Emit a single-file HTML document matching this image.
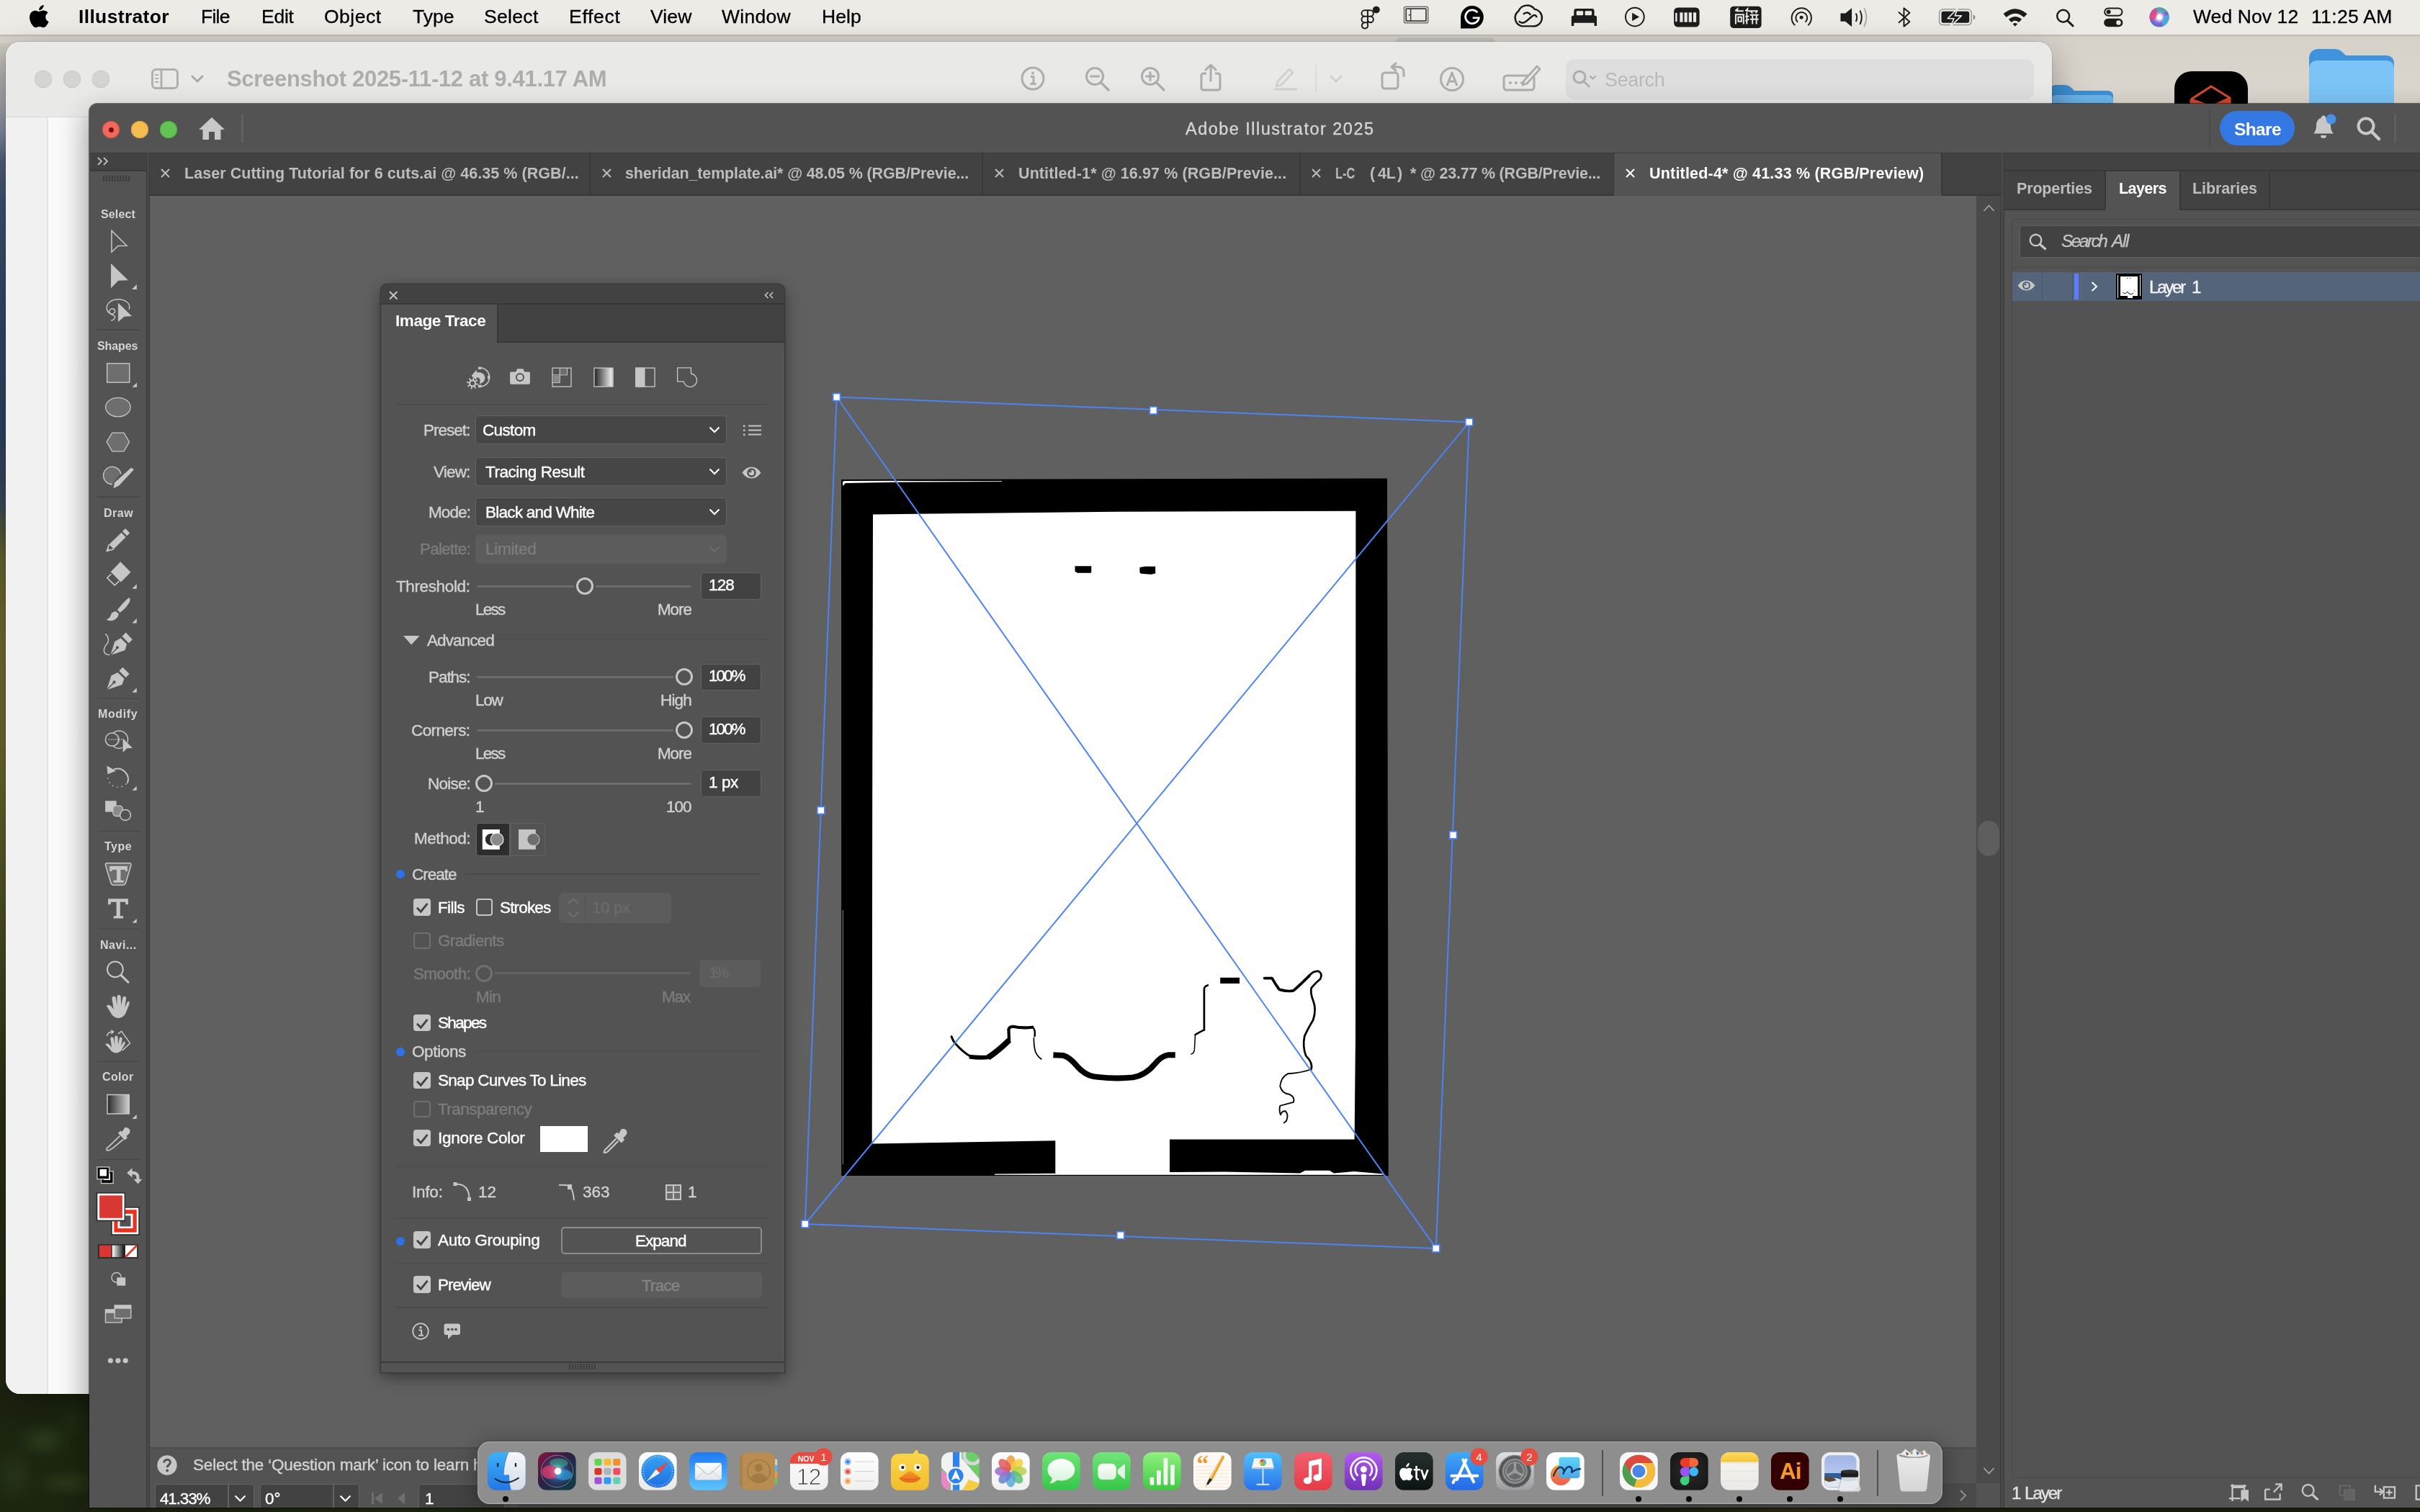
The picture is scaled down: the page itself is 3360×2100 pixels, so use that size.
<!DOCTYPE html>
<html><head><meta charset="utf-8"><title>Adobe Illustrator 2025</title>
<style>
html,body{margin:0;padding:0;}
body{width:3360px;height:2100px;position:relative;overflow:hidden;background:#20280f;font-family:"Liberation Sans",sans-serif;}
div,span,svg{position:absolute;box-sizing:border-box;}
span{white-space:pre;will-change:transform;}
svg{overflow:visible;}
</style></head><body>
<div style="left:0.0px;top:48.0px;width:140.0px;height:2052.0px;background:linear-gradient(180deg,#d6d2ca 0px,#bdbab4 40px,#a3a7ad 100px,#7f8a9c 140px,#52627f 175px,#3f5274 230px,#334668 400px,#2f4263 560px,#3a4a5c 650px,#4d5638 690px,#666630 730px,#746c30 850px,#6c6a2c 1000px,#575828 1150px,#3d441c 1330px,#2a3014 1500px,#222a12 1800px,#1c2410 2052px);"></div>
<div style="left:0.0px;top:1930.0px;width:3360.0px;height:170.0px;background:#1c2510;background-image:radial-gradient(ellipse 40px 26px at 60px 70px,#2c3b1c,transparent),radial-gradient(ellipse 30px 40px at 20px 120px,#26331a,transparent),radial-gradient(ellipse 50px 20px at 95px 130px,#2a3718,transparent),radial-gradient(ellipse 26px 30px at 100px 40px,#222c14,transparent),radial-gradient(ellipse 300px 8px at 1600px 167px,#3a3a1c,transparent),radial-gradient(ellipse 200px 8px at 2500px 167px,#3c3818,transparent),radial-gradient(ellipse 300px 8px at 500px 167px,#222c14,transparent);"></div>
<div style="left:2700.0px;top:48.0px;width:660.0px;height:110.0px;background:linear-gradient(180deg,#d6d1c9,#dcd7cf);"></div>
<div style="left:0.0px;top:48.0px;width:3360.0px;height:12.0px;background:linear-gradient(180deg,#d5d0c8,#d8d3cb);"></div>
<svg style="left:2848.0px;top:110.0px;" width="100" height="40" viewBox="0 0 100 40"><path d="M0 14 Q0 8 6 8 L18 8 Q24 8 28 12 L32 16 L78 16 Q86 16 86 24 L86 40 L0 40Z" fill="#3f8fd6"/><path d="M0 28 Q0 22 8 22 L78 22 Q86 22 86 30 L86 40 L0 40Z" fill="#6cb6ec"/></svg>
<div style="left:3019.0px;top:99.0px;width:102.0px;height:60.0px;background:#000;border-radius:24px 24px 0 0;"></div>
<svg style="left:3040.0px;top:118.0px;" width="60" height="30" viewBox="0 0 60 30"><path d="M2 20 L30 2 L56 18 L56 30 M2 20 L2 30 M2 20 L30 30 L56 18" fill="none" stroke="#d9482b" stroke-width="3"/><path d="M2 20 L30 30 L56 18 L56 30 L2 30Z" fill="#c8452c"/></svg>
<svg style="left:3206.0px;top:66.0px;" width="122" height="80" viewBox="0 0 122 80"><path d="M0 16 Q0 2 14 2 L34 2 Q42 2 47 7 L51 11 L106 11 Q118 11 118 23 L118 80 L0 80Z" fill="#3f93dc"/><path d="M0 30 Q0 18 12 18 L106 18 Q118 18 118 30 L118 80 L0 80Z" fill="#7cc4f5"/></svg>
<div style="left:1937.0px;top:52.0px;width:139.0px;height:8.0px;background:#c4c1bb;border-radius:7px 7px 0 0;"></div>
<div style="left:0.0px;top:0.0px;width:3360.0px;height:47.5px;background:#ecebe5;box-shadow:0 1px 3px rgba(0,0,0,.18);"></div>
<svg style="left:41.0px;top:7.0px;" width="27" height="32" viewBox="0 0 27 32"><path d="M18.7 5.1c1.2-1.5 2-3.500 1.800-5.1-1.700.1-3.800 1.100-5 2.600-1.100 1.300-2.100 3.300-1.800 5.200 1.900.1 3.800-1 5-2.700zM20.500 8.200c-2.800-.2-5.100 1.600-6.400 1.600-1.300 0-3.400-1.500-5.600-1.500-2.900 0-5.500 1.700-7 4.300-3 5.200-.8 12.900 2.100 17.100 1.400 2.100 3.100 4.400 5.400 4.300 2.100-.1 3-1.400 5.600-1.400s3.300 1.400 5.600 1.300c2.300 0 3.800-2.100 5.200-4.200 1.600-2.400 2.300-4.700 2.300-4.800-.1 0-4.500-1.700-4.500-6.800 0-4.300 3.500-6.300 3.600-6.400-1.900-2.900-5-3.300-6.300-3.500z" fill="#000" transform="scale(0.96,0.92)"/></svg>
<span style="left:109.0px;top:10.1px;font-size:26.5px;line-height:26.5px;color:#000;font-weight:bold;letter-spacing:0.34px;">Illustrator</span>
<span style="left:279.0px;top:10.1px;font-size:26.5px;line-height:26.5px;color:#000;letter-spacing:-0.75px;-webkit-text-stroke:0.3px #000;">File</span>
<span style="left:362.8px;top:10.1px;font-size:26.5px;line-height:26.5px;color:#000;letter-spacing:-0.24px;-webkit-text-stroke:0.3px #000;">Edit</span>
<span style="left:450.0px;top:10.1px;font-size:26.5px;line-height:26.5px;color:#000;letter-spacing:0.48px;-webkit-text-stroke:0.3px #000;">Object</span>
<span style="left:572.7px;top:10.1px;font-size:26.5px;line-height:26.5px;color:#000;letter-spacing:0.04px;-webkit-text-stroke:0.3px #000;">Type</span>
<span style="left:672.0px;top:10.1px;font-size:26.5px;line-height:26.5px;color:#000;letter-spacing:0.32px;-webkit-text-stroke:0.3px #000;">Select</span>
<span style="left:790.0px;top:10.1px;font-size:26.5px;line-height:26.5px;color:#000;letter-spacing:0.70px;-webkit-text-stroke:0.3px #000;">Effect</span>
<span style="left:902.5px;top:10.1px;font-size:26.5px;line-height:26.5px;color:#000;letter-spacing:0.13px;-webkit-text-stroke:0.3px #000;">View</span>
<span style="left:1002.4px;top:10.1px;font-size:26.5px;line-height:26.5px;color:#000;letter-spacing:0.26px;-webkit-text-stroke:0.3px #000;">Window</span>
<span style="left:1140.6px;top:10.1px;font-size:26.5px;line-height:26.5px;color:#000;letter-spacing:0.07px;-webkit-text-stroke:0.3px #000;">Help</span>
<span style="left:3044.8px;top:10.1px;font-size:26.5px;line-height:26.5px;color:#000;letter-spacing:0.09px;-webkit-text-stroke:0.3px #000;">Wed Nov 12</span>
<span style="left:3209.0px;top:10.1px;font-size:26.5px;line-height:26.5px;color:#000;letter-spacing:0.35px;-webkit-text-stroke:0.3px #000;">11:25 AM</span>
<div style="left:8.0px;top:58.0px;width:2841.0px;height:1878.0px;background:#f3f3f3;border-radius:20px;box-shadow:0 0 0 1px rgba(0,0,0,.12),0 18px 50px rgba(0,0,0,.35);overflow:hidden;"><div style="left:0;top:0;width:2841px;height:105px;background:#e9e9e8;border-bottom:1px solid #d9d9d9;"></div><div style="left:0;top:105px;width:59px;height:1780px;background:#f1f1f1;border-right:2px solid #e3e3e3;"></div><div style="left:59px;top:105px;width:70px;height:1780px;background:linear-gradient(90deg,#fbfbfb 0,#f8f8f8 22px,#f0f0f0 42px,#e6e6e6 57px);"></div></div>
<div style="left:48.0px;top:98.0px;width:24.0px;height:24.0px;background:#d4d4d3;border-radius:50%;box-shadow:inset 0 0 0 1px #c6c6c6;"></div>
<div style="left:88.0px;top:98.0px;width:24.0px;height:24.0px;background:#d4d4d3;border-radius:50%;box-shadow:inset 0 0 0 1px #c6c6c6;"></div>
<div style="left:128.0px;top:98.0px;width:24.0px;height:24.0px;background:#d4d4d3;border-radius:50%;box-shadow:inset 0 0 0 1px #c6c6c6;"></div>
<svg style="left:210.0px;top:95.0px;" width="40" height="30" viewBox="0 0 40 30"><rect x="1.500" y="1.500" width="35" height="26" rx="5" fill="none" stroke="#b0b0b0" stroke-width="3"/><path d="M14 2V28" stroke="#b0b0b0" stroke-width="3"/><path d="M5 9h5M5 14h5M5 19h5" stroke="#b0b0b0" stroke-width="2"/></svg>
<svg style="left:265.0px;top:104.0px;" width="18" height="12" viewBox="0 0 18 12"><path d="M2 2L9 9L16 2" fill="none" stroke="#a9a9a9" stroke-width="3" stroke-linecap="round" stroke-linejoin="round"/></svg>
<span style="left:314.5px;top:94.4px;font-size:31px;line-height:31px;color:#adadad;font-weight:bold;letter-spacing:-0.31px;">Screenshot 2025-11-12 at 9.41.17 AM</span>
<svg style="left:1416.0px;top:92.0px;" width="36" height="36" viewBox="0 0 36 36"><circle cx="18" cy="17" r="15" fill="none" stroke="#adadad" stroke-width="3"/><circle cx="18" cy="9.500" r="2" fill="#adadad"/><path d="M15 14.500h4v10M14.500 24.500h8" fill="none" stroke="#adadad" stroke-width="2.800"/></svg>
<svg style="left:1506.0px;top:92.0px;" width="36" height="36" viewBox="0 0 36 36"><circle cx="14" cy="14" r="11.500" fill="none" stroke="#adadad" stroke-width="3"/><path d="M22.500 22.500L33 33" stroke="#adadad" stroke-width="3.200" stroke-linecap="round"/><path d="M8.500 14h11" stroke="#adadad" stroke-width="3" stroke-linecap="round"/></svg>
<svg style="left:1583.0px;top:92.0px;" width="36" height="36" viewBox="0 0 36 36"><circle cx="14" cy="14" r="11.500" fill="none" stroke="#adadad" stroke-width="3"/><path d="M22.500 22.500L33 33" stroke="#adadad" stroke-width="3.200" stroke-linecap="round"/><path d="M8.500 14h11M14 8.500v11" stroke="#adadad" stroke-width="3" stroke-linecap="round"/></svg>
<svg style="left:1665.0px;top:88.0px;" width="32" height="40" viewBox="0 0 32 40"><path d="M10 14H6a3 3 0 0 0-3 3v17a3 3 0 0 0 3 3h20a3 3 0 0 0 3-3V17a3 3 0 0 0-3-3h-4" fill="none" stroke="#adadad" stroke-width="3"/><path d="M16 24V3M9 9l7-7 7 7" fill="none" stroke="#adadad" stroke-width="3" stroke-linecap="round" stroke-linejoin="round"/></svg>
<svg style="left:1767.0px;top:90.0px;" width="36" height="36" viewBox="0 0 36 36"><path d="M7 23L23 6l5 5L12 28l-7 2z" fill="none" stroke="#d0d0d0" stroke-width="2.800" stroke-linejoin="round"/><path d="M2 34h32" stroke="#d0d0d0" stroke-width="2.800"/></svg>
<div style="left:1826.0px;top:90.0px;width:2.0px;height:38.0px;background:#dcdcdc;"></div>
<svg style="left:1846.0px;top:104.0px;" width="18" height="12" viewBox="0 0 18 12"><path d="M2 2L9 9L16 2" fill="none" stroke="#d0d0d0" stroke-width="3" stroke-linecap="round" stroke-linejoin="round"/></svg>
<svg style="left:1916.0px;top:86.0px;" width="38" height="40" viewBox="0 0 38 40"><rect x="3" y="15" width="22" height="22" rx="4" fill="none" stroke="#adadad" stroke-width="3"/><path d="M17 7h9a7 7 0 0 1 7 7v7" fill="none" stroke="#adadad" stroke-width="3"/><path d="M22 2l-6 5 6 5" fill="none" stroke="#adadad" stroke-width="3" stroke-linejoin="round" stroke-linecap="round"/></svg>
<svg style="left:1998.0px;top:92.0px;" width="36" height="36" viewBox="0 0 36 36"><circle cx="18" cy="18" r="15.500" fill="none" stroke="#adadad" stroke-width="3"/><path d="M11 27l7-18 7 18M14 21h8" fill="none" stroke="#adadad" stroke-width="3" stroke-linejoin="round"/></svg>
<svg style="left:2086.0px;top:88.0px;" width="54" height="40" viewBox="0 0 54 40"><rect x="2" y="17" width="42" height="20" rx="4" fill="none" stroke="#adadad" stroke-width="3"/><circle cx="11" cy="27" r="2" fill="#adadad"/><circle cx="19" cy="27" r="2" fill="#adadad"/><circle cx="27" cy="27" r="2" fill="#adadad"/><path d="M30 24L48 4l4 4-18 20-6 2z" fill="#e9e9e8" stroke="#adadad" stroke-width="2.800" stroke-linejoin="round"/></svg>
<div style="left:2174.0px;top:82.0px;width:650.0px;height:56.0px;background:#dedede;border-radius:12px;"></div>
<svg style="left:2183.0px;top:97.0px;" width="34" height="28" viewBox="0 0 34 28"><circle cx="10" cy="10" r="8" fill="none" stroke="#adadad" stroke-width="3"/><path d="M16 16l7 7" stroke="#adadad" stroke-width="2.800" stroke-linecap="round"/><path d="M25 9l3.500 3.500L32 9" fill="none" stroke="#adadad" stroke-width="2.200" stroke-linecap="round" stroke-linejoin="round"/></svg>
<span style="left:2228.4px;top:98.3px;font-size:27px;line-height:27px;color:#b9b9b9;letter-spacing:-0.37px;">Search</span>
<div style="left:124.0px;top:144.0px;width:3300.0px;height:1949.5px;background:#535353;border-radius:11px 0 0 0;box-shadow:0 0 0 1px rgba(0,0,0,.5),0 14px 40px rgba(0,0,0,.32);"></div>
<div style="left:142.0px;top:168.0px;width:24.0px;height:24.0px;background:#ee6a5f;border-radius:50%;box-shadow:inset 0 0 0 1px #d1503f;"></div>
<div style="left:150.5px;top:176.5px;width:7.0px;height:7.0px;background:#7a0d08;border-radius:50%;"></div>
<div style="left:182.0px;top:168.0px;width:24.0px;height:24.0px;background:#f5bd4f;border-radius:50%;box-shadow:inset 0 0 0 1px #d6a243;"></div>
<div style="left:222.0px;top:168.0px;width:24.0px;height:24.0px;background:#61c454;border-radius:50%;box-shadow:inset 0 0 0 1px #4fa73f;"></div>
<svg style="left:275.0px;top:162.0px;" width="38" height="33" viewBox="0 0 38 33"><path d="M19 1L1 18h5.500v14H15V21h8v11h8.500V18H37z" fill="#c8c8c8"/></svg>
<div style="left:335.0px;top:158.5px;width:3.0px;height:39.0px;background:#606060;"></div>
<span style="left:1646.2px;top:168.0px;font-size:23.5px;line-height:23.5px;color:#d6d6d6;letter-spacing:1.48px;-webkit-text-stroke:0.35px #d6d6d6;">Adobe Illustrator 2025</span>
<div style="left:3067.0px;top:152.0px;width:2.0px;height:52.0px;background:#4a4a4a;"></div>
<div style="left:3081.8px;top:154.2px;width:104.2px;height:47.7px;background:#3478e3;border-radius:24px;"></div>
<span style="left:3101.5px;top:167.5px;font-size:24.5px;line-height:24.5px;color:#fff;font-weight:bold;letter-spacing:-0.62px;">Share</span>
<svg style="left:3210.0px;top:159.0px;" width="34" height="36" viewBox="0 0 34 36"><path d="M13 4.500a3 3 0 0 1 6 0c5 1.500 7 6 7 11 0 6 2 9 4 11H2c2-2 4-5 4-11 0-5 2-9.500 7-11z" fill="#c8c8c8"/><path d="M12 29a4 4 0 0 0 8 0z" fill="#c8c8c8"/><circle cx="26.500" cy="6.500" r="7" fill="#4a90e8"/></svg>
<svg style="left:3271.0px;top:160.5px;" width="35" height="35" viewBox="0 0 35 35"><circle cx="14" cy="14" r="10.500" fill="none" stroke="#c8c8c8" stroke-width="4"/><path d="M22 22l10 10" stroke="#c8c8c8" stroke-width="4.500" stroke-linecap="round"/></svg>
<div style="left:3324.0px;top:158.0px;width:3.0px;height:40.0px;background:#5d5d5d;"></div>
<div style="left:125.0px;top:212.0px;width:3235.0px;height:2.0px;background:#3a3a3a;"></div>
<div style="left:125.0px;top:213.0px;width:78.0px;height:23.0px;background:#424242;"></div>
<div style="left:125.0px;top:236.0px;width:78.0px;height:2.0px;background:#3a3a3a;"></div>
<div style="left:202.5px;top:212.0px;width:5.5px;height:1882.0px;background:#484848;border-left:1.500px solid #3c3c3c;border-right:1.500px solid #3c3c3c;"></div>
<svg style="left:134.0px;top:217.0px;" width="18" height="14" viewBox="0 0 18 14"><path d="M2 2l5 5-5 5M10 2l5 5-5 5" fill="none" stroke="#c0c0c0" stroke-width="1.800"/></svg>
<svg style="left:143.0px;top:243.0px;" width="40" height="10" viewBox="0 0 40 10"><rect x="0.0" y="1" width="2" height="8" fill="#3c3c3c"/><rect x="3.9" y="1" width="2" height="8" fill="#3c3c3c"/><rect x="7.8" y="1" width="2" height="8" fill="#3c3c3c"/><rect x="11.7" y="1" width="2" height="8" fill="#3c3c3c"/><rect x="15.6" y="1" width="2" height="8" fill="#3c3c3c"/><rect x="19.5" y="1" width="2" height="8" fill="#3c3c3c"/><rect x="23.4" y="1" width="2" height="8" fill="#3c3c3c"/><rect x="27.3" y="1" width="2" height="8" fill="#3c3c3c"/><rect x="31.2" y="1" width="2" height="8" fill="#3c3c3c"/><rect x="35.1" y="1" width="2" height="8" fill="#3c3c3c"/></svg>
<div style="left:208.0px;top:213.0px;width:2569.0px;height:57.0px;background:#424242;"></div>
<div style="left:208.0px;top:269.5px;width:2569.0px;height:2.0px;background:#383838;"></div>
<div style="left:818.0px;top:213.0px;width:2.0px;height:57.0px;background:#383838;"></div>
<svg style="left:223.3px;top:234.0px;" width="13" height="13" viewBox="0 0 13 13"><path d="M1 1l11 11M12 1L1 12" stroke="#bdbdbd" stroke-width="2"/></svg>
<span style="left:256.0px;top:231.0px;font-size:21.5px;line-height:21.5px;color:#bdbdbd;font-weight:bold;letter-spacing:0.05px;">Laser Cutting Tutorial for 6 cuts.ai @ 46.35 % (RGB/...</span>
<div style="left:1363.0px;top:213.0px;width:2.0px;height:57.0px;background:#383838;"></div>
<svg style="left:835.5px;top:234.0px;" width="13" height="13" viewBox="0 0 13 13"><path d="M1 1l11 11M12 1L1 12" stroke="#bdbdbd" stroke-width="2"/></svg>
<span style="left:868.4px;top:231.0px;font-size:21.5px;line-height:21.5px;color:#bdbdbd;font-weight:bold;letter-spacing:-0.14px;">sheridan_template.ai* @ 48.05 % (RGB/Previe...</span>
<div style="left:1803.6px;top:213.0px;width:2.0px;height:57.0px;background:#383838;"></div>
<svg style="left:1381.2px;top:234.0px;" width="13" height="13" viewBox="0 0 13 13"><path d="M1 1l11 11M12 1L1 12" stroke="#bdbdbd" stroke-width="2"/></svg>
<span style="left:1414.2px;top:231.0px;font-size:21.5px;line-height:21.5px;color:#bdbdbd;font-weight:bold;letter-spacing:0.10px;">Untitled-1* @ 16.97 % (RGB/Previe...</span>
<div style="left:2240.4px;top:213.0px;width:2.0px;height:57.0px;background:#383838;"></div>
<svg style="left:1821.0px;top:234.0px;" width="13" height="13" viewBox="0 0 13 13"><path d="M1 1l11 11M12 1L1 12" stroke="#bdbdbd" stroke-width="2"/></svg>
<span style="left:1854.0px;top:231.0px;font-size:21.5px;line-height:21.5px;color:#bdbdbd;font-weight:bold;transform:scaleX(.76);transform-origin:left center;">L-C</span>
<span style="left:1901.5px;top:231.0px;font-size:21.5px;line-height:21.5px;color:#bdbdbd;font-weight:bold;">(</span>
<span style="left:1913.0px;top:231.0px;font-size:21.5px;line-height:21.5px;color:#bdbdbd;font-weight:bold;letter-spacing:-0.30px;">4L</span>
<span style="left:1939.5px;top:231.0px;font-size:21.5px;line-height:21.5px;color:#bdbdbd;font-weight:bold;">)</span>
<span style="left:1958.0px;top:231.0px;font-size:21.5px;line-height:21.5px;color:#bdbdbd;font-weight:bold;letter-spacing:-0.21px;">* @ 23.77 % (RGB/Previe...</span>
<div style="left:2241.4px;top:213.0px;width:454.9px;height:58.5px;background:#535353;"></div>
<div style="left:2695.3px;top:213.0px;width:2.0px;height:57.0px;background:#383838;"></div>
<svg style="left:2257.2px;top:234.0px;" width="13" height="13" viewBox="0 0 13 13"><path d="M1 1l11 11M12 1L1 12" stroke="#ffffff" stroke-width="2"/></svg>
<span style="left:2290.2px;top:231.0px;font-size:21.5px;line-height:21.5px;color:#ffffff;font-weight:bold;letter-spacing:0.19px;">Untitled-4* @ 41.33 % (RGB/Preview)</span>
<div style="left:208.0px;top:271.5px;width:2535.5px;height:1739.0px;background:#606060;"></div>
<div style="left:2743.5px;top:271.5px;width:33.5px;height:1788.0px;background:#4a4a4a;"></div>
<svg style="left:2752.5px;top:284.0px;" width="17" height="10" viewBox="0 0 17 10"><path d="M1.500 9L8.500 1.500 15.500 9" fill="none" stroke="#a2a2a2" stroke-width="1.800"/></svg>
<div style="left:2745.5px;top:1140.0px;width:30.0px;height:49.0px;background:#5e5e5e;border-radius:15px;"></div>
<svg style="left:2752.5px;top:2038.0px;" width="17" height="10" viewBox="0 0 17 10"><path d="M1.500 1L8.500 8.500 15.500 1" fill="none" stroke="#a2a2a2" stroke-width="1.800"/></svg>
<div style="left:2777.0px;top:212.0px;width:5.5px;height:1882.0px;background:#484848;border-left:1.500px solid #3c3c3c;border-right:1.500px solid #3c3c3c;"></div>
<div style="left:208.0px;top:2010.2px;width:2535.5px;height:49.6px;background:#535353;"></div>
<div style="left:208.0px;top:2010.2px;width:2535.5px;height:1.8px;background:#4c4c4c;"></div>
<div style="left:720.0px;top:2059.8px;width:2023.5px;height:34.0px;background:#4a4a4a;"></div>
<div style="left:2743.5px;top:2059.5px;width:33.5px;height:34.0px;background:#535353;"></div>
<svg style="left:218.0px;top:2020.5px;" width="28" height="28" viewBox="0 0 28 28"><circle cx="14" cy="14" r="13.700" fill="#c6c6c6"/><path d="M9.800 10.500c0-2.600 1.900-4.200 4.400-4.200s4.300 1.500 4.300 3.800c0 3.300-4.200 3.500-4.200 6.900" fill="none" stroke="#535353" stroke-width="3"/><circle cx="14.200" cy="21.500" r="1.900" fill="#535353"/></svg>
<span style="left:268.0px;top:2024.0px;font-size:22.5px;line-height:22.5px;color:#d2d2d2;letter-spacing:-0.19px;-webkit-text-stroke:0.4px #d2d2d2;">Select the ‘Question mark’ icon to learn how</span>
<div style="left:215.0px;top:2060.6px;width:138.0px;height:33.0px;background:#424242;border:1.500px solid #636363;border-bottom:none;border-radius:5px 5px 0 0;"></div>
<div style="left:316.0px;top:2062.0px;width:1.5px;height:31.5px;background:#636363;"></div>
<span style="left:222.3px;top:2070.5px;font-size:22.5px;line-height:22.5px;color:#fff;letter-spacing:-1.15px;-webkit-text-stroke:0.4px #fff;">41.33%</span>
<svg style="left:325.0px;top:2076.0px;" width="17" height="11" viewBox="0 0 17 11"><path d="M1.500 1.500L8.500 8.500 15.500 1.500" fill="none" stroke="#fff" stroke-width="2.200"/></svg>
<div style="left:361.0px;top:2060.6px;width:138.0px;height:33.0px;background:#424242;border:1.500px solid #636363;border-bottom:none;border-radius:5px 5px 0 0;"></div>
<div style="left:462.0px;top:2062.0px;width:1.5px;height:31.5px;background:#636363;"></div>
<span style="left:368.4px;top:2070.5px;font-size:22.5px;line-height:22.5px;color:#fff;-webkit-text-stroke:0.4px #fff;">0°</span>
<svg style="left:471.0px;top:2076.0px;" width="17" height="11" viewBox="0 0 17 11"><path d="M1.500 1.500L8.500 8.500 15.500 1.500" fill="none" stroke="#fff" stroke-width="2.200"/></svg>
<svg style="left:515.0px;top:2072.0px;" width="18" height="18" viewBox="0 0 18 18"><rect x="1" y="1" width="3" height="16" fill="#6f6f6f"/><path d="M16 1v16L5 9z" fill="#6f6f6f"/></svg>
<svg style="left:551.0px;top:2072.0px;" width="12" height="18" viewBox="0 0 12 18"><path d="M11 1v16L1 9z" fill="#6f6f6f"/></svg>
<div style="left:581.0px;top:2060.6px;width:120.0px;height:33.0px;background:#424242;border:1.500px solid #636363;border-bottom:none;border-radius:5px 5px 0 0;"></div>
<span style="left:590.2px;top:2070.5px;font-size:22.5px;line-height:22.5px;color:#fff;-webkit-text-stroke:0.4px #fff;">1</span>
<svg style="left:2720.0px;top:2068.0px;" width="12" height="18" viewBox="0 0 12 18"><path d="M2 2l7 7-7 7" fill="none" stroke="#8e8e8e" stroke-width="2"/></svg>
<span style="left:139.5px;top:290.0px;font-size:16px;line-height:16px;color:#d4d4d4;font-weight:bold;letter-spacing:0.14px;">Select</span>
<span style="left:135.3px;top:472.8px;font-size:16px;line-height:16px;color:#d4d4d4;font-weight:bold;letter-spacing:-0.09px;">Shapes</span>
<span style="left:143.5px;top:704.7px;font-size:16px;line-height:16px;color:#d4d4d4;font-weight:bold;letter-spacing:0.49px;">Draw</span>
<span style="left:136.3px;top:984.1px;font-size:16px;line-height:16px;color:#d4d4d4;font-weight:bold;letter-spacing:0.61px;">Modify</span>
<span style="left:144.6px;top:1167.9px;font-size:16px;line-height:16px;color:#d4d4d4;font-weight:bold;letter-spacing:0.51px;">Type</span>
<span style="left:138.5px;top:1304.8px;font-size:16px;line-height:16px;color:#d4d4d4;font-weight:bold;letter-spacing:0.52px;">Navi...</span>
<span style="left:142.0px;top:1488.3px;font-size:16px;line-height:16px;color:#d4d4d4;font-weight:bold;letter-spacing:0.36px;">Color</span>
<div style="left:134.5px;top:457.4px;width:59.0px;height:1.6px;background:#464646;"></div>
<div style="left:134.5px;top:689.4px;width:59.0px;height:1.6px;background:#464646;"></div>
<div style="left:134.5px;top:969.5px;width:59.0px;height:1.6px;background:#464646;"></div>
<div style="left:134.5px;top:1153.6px;width:59.0px;height:1.6px;background:#464646;"></div>
<div style="left:134.5px;top:1289.6px;width:59.0px;height:1.6px;background:#464646;"></div>
<div style="left:134.5px;top:1473.6px;width:59.0px;height:1.6px;background:#464646;"></div>
<div style="left:134.5px;top:1609.6px;width:59.0px;height:1.6px;background:#464646;"></div>
<svg style="left:125px;top:280px;" width="80" height="180" viewBox="0 0 672 1512" preserveAspectRatio="none">
<path d="M252 340 L252 588 L328 516 L428 514Z" fill="none" stroke="#c6c6c6" stroke-width="13" stroke-linejoin="miter"/>
<path d="M244 722 L244 1010 L330 922 L445 918Z" fill="#c6c6c6"/>
<path d="M545 965V1025H487Z" fill="#c6c6c6"/>
<path d="M455 1258 C480 1180 400 1140 330 1140 C250 1140 195 1185 195 1240 C195 1290 235 1320 275 1305 C300 1290 295 1255 265 1250 C235 1248 215 1275 230 1300 C250 1330 300 1320 290 1350 C285 1375 265 1385 245 1388" fill="none" stroke="#c6c6c6" stroke-width="12"/>
<path d="M325 1175 L325 1410 L400 1345 L495 1340Z" fill="#c6c6c6" stroke="#535353" stroke-width="6"/>
</svg>
<svg style="left:125px;top:460px;" width="80" height="240" viewBox="0 0 504 1512" preserveAspectRatio="none">
<rect x="149" y="282" width="196" height="166" fill="#6e6e6e" stroke="#c6c6c6" stroke-width="9"/>
<path d="M410 450V490H368Z" fill="#c6c6c6"/>
<ellipse cx="245" cy="665" rx="109" ry="83" fill="#6e6e6e" stroke="#c6c6c6" stroke-width="8"/>
<path d="M146 968L194 889H296L344 968L296 1051H194Z" fill="#6e6e6e" stroke="#c6c6c6" stroke-width="8"/>
<path d="M195 1340 A77 77 0 1 1 268 1245 L215 1310Z" fill="#6e6e6e"/>
<path d="M195 1340 A77 77 0 1 1 270 1250" fill="none" stroke="#c6c6c6" stroke-width="9"/>
<path d="M355 1198 Q372 1192 382 1212 L255 1350 L205 1375 L215 1325Z" fill="#c6c6c6"/>
</svg>
<svg style="left:125px;top:690px;" width="80" height="280" viewBox="0 0 432 1512" preserveAspectRatio="none">
<path d="M265 238L298 272L277 293L243 259Z" fill="#c6c6c6"/>
<path d="M235 268L268 302L178 392L143 358Z" fill="#c6c6c6"/>
<path d="M143 358L125 408L178 392" fill="none" stroke="#c6c6c6" stroke-width="9" stroke-linejoin="round"/>
<path d="M125 408L134 384L150 400Z" fill="#c6c6c6"/>
<path d="M228 488L305 565L232 640L155 563Z" fill="#c6c6c6"/>
<path d="M158 580L128 608L185 664L218 632" fill="none" stroke="#c6c6c6" stroke-width="9" stroke-linejoin="round"/>
<path d="M350 655V690H315Z" fill="#c6c6c6"/>
<path d="M205 848Q250 790 290 757Q306 760 296 790Q266 842 224 868Z" fill="#c6c6c6"/>
<path d="M196 860L216 880Q202 925 160 930Q135 931 122 920Q150 910 156 885Q165 860 196 860Z" fill="#c6c6c6"/>
<path d="M350 912V948H315Z" fill="#c6c6c6"/>
<path d="M115 1028Q145 1050 135 1092Q100 1130 105 1160Q115 1188 148 1185" fill="none" stroke="#c6c6c6" stroke-width="8"/>
<path d="M268 1018L318 1070L290 1098L240 1046Z" fill="#c6c6c6"/>
<path d="M230 1060L276 1106L262 1150L152 1190L186 1085Z" fill="#c6c6c6"/>
<path d="M152 1190L205 1132" stroke="#535353" stroke-width="8"/><circle cx="205" cy="1130" r="11" fill="#535353"/>
<path d="M245 1278L295 1328L268 1355L218 1305Z" fill="#c6c6c6"/>
<path d="M208 1318L256 1364L240 1410L125 1448L160 1340Z" fill="#c6c6c6"/>
<path d="M125 1448L180 1392" stroke="#535353" stroke-width="8"/><circle cx="181" cy="1390" r="11" fill="#535353"/>
<path d="M350 1432V1468H315Z" fill="#c6c6c6"/>
</svg>
<svg style="left:125px;top:970px;" width="80" height="330" viewBox="0 0 367 1512" preserveAspectRatio="none">
<circle cx="185" cy="262" r="56" fill="none" stroke="#c6c6c6" stroke-width="7"/>
<circle cx="140" cy="262" r="42" fill="#535353" stroke="#c6c6c6" stroke-width="7"/>
<path d="M175 232 A42 42 0 0 1 175 292" fill="none" stroke="#8a8a8a" stroke-width="6"/>
<path d="M118 262H210" stroke="#c6c6c6" stroke-width="6" stroke-dasharray="7 6"/>
<path d="M207 250V348L235 320L275 318Z" fill="#c6c6c6" stroke="#535353" stroke-width="4"/>
<path d="M150 452 A68 68 0 0 1 238 540" fill="none" stroke="#c6c6c6" stroke-width="9"/>
<path d="M108 428L112 482L165 462Z" fill="#c6c6c6"/>
<circle cx="243.9" cy="520.3" r="4" fill="#c6c6c6"/><circle cx="228.1" cy="545.1" r="4" fill="#c6c6c6"/><circle cx="203.3" cy="560.9" r="4" fill="#c6c6c6"/><circle cx="174.1" cy="564.7" r="4" fill="#c6c6c6"/><circle cx="146.0" cy="555.9" r="4" fill="#c6c6c6"/><circle cx="124.3" cy="536.0" r="4" fill="#c6c6c6"/><circle cx="113.0" cy="508.8" r="4" fill="#c6c6c6"/>
<path d="M297 558V585H268Z" fill="#c6c6c6"/>
<rect x="97" y="652" width="71" height="70" fill="#c6c6c6"/>
<rect x="146" y="683" width="62" height="66" rx="20" fill="#8a8a8a" stroke="#c6c6c6" stroke-width="6"/>
<circle cx="225" cy="742" r="34" fill="#535353" stroke="#c6c6c6" stroke-width="7"/>
<path d="M110 1048H250Q266 1048 260 1066L228 1172Q224 1188 208 1188H152Q136 1188 132 1172L100 1066Q94 1048 110 1048Z" fill="#6e6e6e" stroke="#c6c6c6" stroke-width="7"/>
<path d="M125 1068H238V1100H224V1090H195V1158H215V1172H150V1158H170V1090H140V1100H125Z" fill="#c6c6c6"/>
<path d="M115 1275H243V1312H226V1296H192V1385H212V1400H150V1385H168V1296H132V1312H115Z" fill="#c6c6c6"/>
<path d="M297 1402V1428H268Z" fill="#c6c6c6"/>
</svg>
<svg style="left:125px;top:1290px;" width="80" height="330" viewBox="0 0 367 1512" preserveAspectRatio="none">
<circle cx="160" cy="258" r="50" fill="none" stroke="#c6c6c6" stroke-width="9"/>
<path d="M198 296L243 340" stroke="#c6c6c6" stroke-width="14" stroke-linecap="round"/>
<path d="M105 490Q118 478 135 492L150 512L140 445Q140 430 152 430Q162 430 165 445L172 488L172 432Q174 420 184 420Q194 420 196 432L198 488L208 440Q212 428 222 430Q232 434 230 446L222 500L236 470Q242 458 250 464Q254 470 248 484L226 540Q212 568 180 568Q150 568 135 540Z" fill="#c6c6c6"/>
<path d="M98 735Q110 724 124 738L138 756L130 700Q130 688 140 688Q148 688 151 700L157 738L157 690Q159 680 167 680Q175 680 177 690L179 738L187 698Q190 688 198 690Q206 693 205 703L198 748L210 724Q215 714 222 718Q226 723 221 735L203 768Q192 790 166 790Q140 790 128 768Z" fill="#c6c6c6"/>
<path d="M178 668L200 652L255 728L205 775" fill="none" stroke="#c6c6c6" stroke-width="7"/>
<path d="M108 682 A34 34 0 0 1 140 655" fill="none" stroke="#c6c6c6" stroke-width="7"/>
<path d="M135 640L155 655L135 672Z" fill="#c6c6c6"/>
<defs><linearGradient id="tg1" x1="0" x2="1"><stop offset="0" stop-color="#2a2a2a"/><stop offset="1" stop-color="#d0d0d0"/></linearGradient></defs>
<rect x="110" y="1056" width="139" height="121" fill="url(#tg1)" stroke="#c6c6c6" stroke-width="7"/>
<path d="M297 1182V1210H268Z" fill="#c6c6c6"/>
<path d="M222 1265Q245 1260 254 1282Q258 1300 240 1312L232 1320L238 1330L222 1345L178 1300L195 1285L204 1292Z" fill="#c6c6c6"/>
<path d="M190 1318L120 1385Q108 1392 105 1405Q112 1415 125 1408L142 1398L212 1340" fill="none" stroke="#c6c6c6" stroke-width="8" stroke-linejoin="round"/>
</svg>
<svg style="left:125px;top:1610px;" width="80" height="300" viewBox="0 0 403 1512" preserveAspectRatio="none">
<rect x="78" y="85" width="84" height="84" fill="#000" stroke="#c6c6c6" stroke-width="7"/>
<rect x="98" y="103" width="40" height="40" fill="none" stroke="#fff" stroke-width="7"/>
<rect x="50" y="55" width="84" height="84" fill="#000" stroke="#c6c6c6" stroke-width="7"/>
<rect x="68" y="70" width="48" height="48" fill="#fff"/>
<path d="M258 96L295 62V84Q345 84 345 130V140H365L335 172L305 140H325V128Q325 106 295 106V128Z" fill="#c6c6c6"/>
<rect x="147" y="333" width="200" height="200" fill="#2c2c2c"/>
<rect x="155" y="341" width="184" height="184" fill="#fff"/>
<rect x="168" y="354" width="158" height="158" fill="#e8311f"/>
<rect x="194" y="382" width="106" height="102" fill="#fff"/>
<rect x="209" y="395" width="76" height="76" fill="#535353"/>
<rect x="43" y="232" width="204" height="203" fill="#2c2c2c"/>
<rect x="52" y="240" width="188" height="186" fill="#fff"/>
<rect x="66" y="254" width="160" height="158" fill="#d93832"/>
<rect x="55" y="595" width="282" height="100" fill="#2c2c2c"/>
<rect x="65" y="603" width="83" height="82" fill="#d93832"/>
<defs><linearGradient id="tg2" x1="0" x2="1"><stop offset="0" stop-color="#fff"/><stop offset="1" stop-color="#111"/></linearGradient></defs>
<rect x="155" y="603" width="85" height="82" fill="url(#tg2)"/>
<rect x="247" y="603" width="81" height="82" fill="#fff"/>
<path d="M247 685L328 603" stroke="#e8311f" stroke-width="14"/>
<circle cx="185" cy="828" r="34" fill="none" stroke="#c6c6c6" stroke-width="7"/>
<rect x="188" y="828" width="60" height="57" fill="#c6c6c6"/>
<rect x="108" y="1053" width="114" height="90" fill="#6e6e6e" stroke="#c6c6c6" stroke-width="7"/>
<rect x="108" y="1053" width="114" height="24" fill="#c6c6c6"/>
<rect x="172" y="1023" width="114" height="90" fill="#6e6e6e" stroke="#c6c6c6" stroke-width="7"/>
<rect x="172" y="1023" width="114" height="24" fill="#c6c6c6"/>
<circle cx="143" cy="1410" r="18" fill="#c6c6c6"/><circle cx="196" cy="1410" r="18" fill="#c6c6c6"/><circle cx="248" cy="1410" r="18" fill="#c6c6c6"/>
</svg>

<svg style="left:0;top:0;" width="3360" height="2100" viewBox="0 0 3360 2100">
<path d="M1168 666 L1926 664.500 L1927.700 1633 L1168.200 1633Z" fill="#000"/>
<path d="M1212 714.400 L1550 710.700 L1882.400 709.800 L1882.200 1200 L1882 1440 L1880.600 1582.600 L1624 1582.600 L1624 1631.800 L1465.300 1631.800 L1465.300 1584.300 L1210.700 1588.400 L1211.200 1100Z" fill="#fff"/>
<path d="M1624 1628 L1700 1627.500 L1805 1629.500 L1812 1625.800 L1846 1625.800 L1852 1629.500 L1880 1627 L1921 1630.500 L1921 1631.800 L1624 1631.800Z" fill="#fff"/>
<path d="M1381 1630.600 L1465.300 1629.800 L1465.300 1631.800 L1381 1631.800Z" fill="#fff"/>
<path d="M1170 669.200 L1172 668 L1240 667.800 L1391 668.300 L1391 669 L1240 669.700 L1174 671 L1170 675Z" fill="#fff"/>
<path d="M1170.300 1264 V1617" stroke="#aaa" stroke-width="0.800"/>
<path d="M1492.500 786.300 H1515.300 V794 L1514.500 795.700 H1496 L1492.500 793.500Z" fill="#000"/>
<path d="M1582.400 788 L1590 786.700 H1604.200 V796.500 L1598 797.800 L1584 796.800 L1582.400 795Z" fill="#000"/>
</svg>
<svg style="left:1300px;top:1330px;" width="600" height="250" viewBox="0 0 2420 1008" fill="none" stroke="#000" stroke-linecap="round" stroke-linejoin="round">
<path d="M85 442 Q95 470 110 485 Q150 530 190 553" stroke-width="12"/>
<path d="M185 555 Q250 564 300 556" stroke-width="24" stroke-linecap="butt"/>
<path d="M290 560 Q350 520 408 462" stroke-width="32" stroke-linecap="butt"/>
<path d="M408 470 L405 402 Q410 386 430 386 Q480 396 538 390" stroke-width="17"/>
<path d="M538 390 Q556 400 551 440" stroke-width="10"/>
<path d="M546 450 Q546 500 556 530 Q570 558 588 568" stroke-width="7"/>
<path d="M655 545 L710 548 Q745 556 790 610 Q830 655 880 666 Q1000 682 1100 671 Q1170 660 1220 600 Q1260 550 1300 545 L1338 545" stroke-width="32" stroke-linecap="butt"/>
<path d="M1520 155 Q1500 160 1500 178 L1500 405" stroke-width="11"/>
<path d="M1500 405 Q1470 420 1450 432" stroke-width="10"/>
<path d="M1450 432 Q1448 480 1445 520 Q1442 538 1427 540" stroke-width="6"/>
<rect x="1590" y="112" width="108" height="33" fill="#000" stroke="none"/>
<path d="M1838 115 L1880 115 Q1900 150 1920 178 Q1960 192 2000 185 Q2040 150 2088 102" stroke-width="15"/>
<path d="M2088 102 Q2110 72 2140 76 Q2166 90 2150 120 Q2125 140 2100 170 Q2094 200 2110 240 Q2130 290 2110 350 Q2080 400 2062 440 Q2050 500 2070 550 Q2110 590 2100 625" stroke-width="11"/>
<path d="M2100 625 Q2050 645 1970 650 Q1930 670 1925 720 Q1935 760 1975 765 Q2010 780 2000 810 Q1960 820 1925 830 Q1918 860 1928 880 Q1935 858 1955 860 Q1975 880 1960 915 L1947 925" stroke-width="7.500"/>
</svg>

<svg style="left:0;top:0;" width="3360" height="2100" viewBox="0 0 3360 2100"><path d="M1161.6 551.5 L2039.8 586.2 L1993.8 1733.9 L1117.8 1700Z M1161.6 551.5 L1993.8 1733.9 M2039.8 586.2 L1117.8 1700" fill="none" stroke="#4c83f7" stroke-width="2"/><rect x="1156.6" y="546.5" width="10" height="10" fill="#fff" stroke="#4c83f7" stroke-width="1.700"/><rect x="2034.8" y="581.2" width="10" height="10" fill="#fff" stroke="#4c83f7" stroke-width="1.700"/><rect x="1988.8" y="1728.9" width="10" height="10" fill="#fff" stroke="#4c83f7" stroke-width="1.700"/><rect x="1112.8" y="1695.0" width="10" height="10" fill="#fff" stroke="#4c83f7" stroke-width="1.700"/><rect x="1596.4" y="565.0" width="10" height="10" fill="#fff" stroke="#4c83f7" stroke-width="1.700"/><rect x="2012.6" y="1154.8" width="10" height="10" fill="#fff" stroke="#4c83f7" stroke-width="1.700"/><rect x="1550.8" y="1710.7" width="10" height="10" fill="#fff" stroke="#4c83f7" stroke-width="1.700"/><rect x="1134.8" y="1120.5" width="10" height="10" fill="#fff" stroke="#4c83f7" stroke-width="1.700"/></svg>
<div style="left:529.0px;top:394.5px;width:560.0px;height:1511.5px;background:#535353;border-radius:9px 9px 0 0;box-shadow:0 0 0 1.500px #3a3a3a,0 6px 22px rgba(0,0,0,.45);"></div>
<div style="left:529.0px;top:394.5px;width:560.0px;height:27.0px;background:#424242;border-radius:9px 9px 0 0;"></div>
<div style="left:529.0px;top:421.0px;width:560.0px;height:2.0px;background:#383838;"></div>
<div style="left:529.0px;top:423.0px;width:560.0px;height:52.5px;background:#424242;"></div>
<div style="left:529.0px;top:423.0px;width:161.0px;height:54.0px;background:#535353;"></div>
<div style="left:689.5px;top:423.0px;width:2.0px;height:52.5px;background:#383838;"></div>
<div style="left:691.0px;top:474.0px;width:398.0px;height:2.0px;background:#383838;"></div>
<svg style="left:540.0px;top:404.0px;" width="13" height="13" viewBox="0 0 13 13"><path d="M1 1l10.500 10.500M11.500 1L1 11.500" stroke="#c6c6c6" stroke-width="2"/></svg>
<svg style="left:1061.0px;top:404.5px;" width="14" height="10" viewBox="0 0 14 10"><path d="M5.500 1L1.500 5l4 4M12 1L8 5l4 4" fill="none" stroke="#c6c6c6" stroke-width="1.600"/></svg>
<span style="left:548.5px;top:435.0px;font-size:22.5px;line-height:22.5px;color:#ffffff;font-weight:bold;letter-spacing:-0.44px;">Image Trace</span>
<svg style="left:630px;top:490px;" width="360" height="70" viewBox="0 0 2420 471" preserveAspectRatio="none">
<path d="M245 140 A88 88 0 0 1 245 316" fill="none" stroke="#c6c6c6" stroke-width="11"/>
<rect x="228" y="132" width="30" height="22" rx="5" fill="#c6c6c6"/><rect x="228" y="300" width="30" height="24" rx="5" fill="#c6c6c6"/><rect x="316" y="212" width="22" height="32" rx="5" fill="#c6c6c6"/>
<path d="M165 215 L212 158 L212 182 Q288 180 292 232 Q290 278 240 290 Q262 230 212 228 L212 255Z" fill="#c6c6c6"/>
<path d="M175 285L229 296" stroke="#c6c6c6" stroke-width="12"/><path d="M175 285L205 331" stroke="#c6c6c6" stroke-width="12"/><path d="M175 285L164 339" stroke="#c6c6c6" stroke-width="12"/><path d="M175 285L129 315" stroke="#c6c6c6" stroke-width="12"/><path d="M175 285L121 274" stroke="#c6c6c6" stroke-width="12"/><path d="M175 285L145 239" stroke="#c6c6c6" stroke-width="12"/><path d="M175 285L186 231" stroke="#c6c6c6" stroke-width="12"/><path d="M175 285L221 255" stroke="#c6c6c6" stroke-width="12"/><circle cx="175" cy="285" r="34" fill="#c6c6c6"/><circle cx="175" cy="285" r="20" fill="#535353"/>
<path d="M525 190Q525 178 537 178H580L592 150H648L660 178H700Q712 178 712 190V283Q712 295 700 295H537Q525 295 525 283Z" fill="#c6c6c6"/>
<circle cx="618" cy="229" r="34" fill="none" stroke="#535353" stroke-width="13"/>
<rect x="921" y="142" width="175" height="174" fill="none" stroke="#c6c6c6" stroke-width="9"/>
<rect x="995" y="150" width="55" height="50" fill="#6e6e6e"/><rect x="930" y="215" width="55" height="55" fill="#8a8a8a"/>
<path d="M990 142V280M917 207H1060M1058 142V207M917 278H992" fill="none" stroke="#c6c6c6" stroke-width="8"/>
<defs><linearGradient id="ig1" x1="0" x2="1"><stop offset="0" stop-color="#222"/><stop offset="0.900" stop-color="#e6e6e6"/><stop offset="1" stop-color="#bbb"/></linearGradient></defs>
<rect x="1311" y="142" width="175" height="174" fill="url(#ig1)" stroke="#c6c6c6" stroke-width="9"/>
<rect x="1699" y="142" width="177" height="174" fill="none" stroke="#c6c6c6" stroke-width="9"/><rect x="1695" y="138" width="90" height="182" fill="#c6c6c6"/>
<path d="M2088 140H2215V195A62 62 0 1 1 2146 268H2088Z" fill="none" stroke="#c6c6c6" stroke-width="9"/>
</svg>
<div style="left:550.0px;top:560.5px;width:518.0px;height:1.6px;background:#464646;"></div>
<span style="left:588.4px;top:586.5px;font-size:22.5px;line-height:22.5px;color:#d0d0d0;letter-spacing:-1.00px;-webkit-text-stroke:0.42px #d0d0d0;">Preset:</span>
<div style="left:660.3px;top:576.7px;width:349.0px;height:40.6px;background:#464646;border:1.500px solid #626262;border-radius:5px;"></div>
<span style="left:670.2px;top:586.5px;font-size:22.5px;line-height:22.5px;color:#ffffff;letter-spacing:-0.65px;-webkit-text-stroke:0.42px #ffffff;">Custom</span>
<svg style="left:983.5px;top:592.0px;" width="16" height="11" viewBox="0 0 16 11"><path d="M1.500 1.500L8 8 14.500 1.500" fill="none" stroke="#ffffff" stroke-width="2.200"/></svg>
<span style="left:602.2px;top:644.6px;font-size:22.5px;line-height:22.5px;color:#d0d0d0;letter-spacing:-0.82px;-webkit-text-stroke:0.42px #d0d0d0;">View:</span>
<div style="left:660.3px;top:635.2px;width:349.0px;height:39.8px;background:#464646;border:1.500px solid #626262;border-radius:5px;"></div>
<span style="left:674.4px;top:644.6px;font-size:22.5px;line-height:22.5px;color:#ffffff;letter-spacing:-0.47px;-webkit-text-stroke:0.42px #ffffff;">Tracing Result</span>
<svg style="left:983.5px;top:650.1px;" width="16" height="11" viewBox="0 0 16 11"><path d="M1.500 1.500L8 8 14.500 1.500" fill="none" stroke="#ffffff" stroke-width="2.200"/></svg>
<span style="left:594.6px;top:700.5px;font-size:22.5px;line-height:22.5px;color:#d0d0d0;letter-spacing:-0.89px;-webkit-text-stroke:0.42px #d0d0d0;">Mode:</span>
<div style="left:660.3px;top:691.2px;width:349.0px;height:39.6px;background:#464646;border:1.500px solid #626262;border-radius:5px;"></div>
<span style="left:674.4px;top:700.5px;font-size:22.5px;line-height:22.5px;color:#ffffff;letter-spacing:-0.75px;-webkit-text-stroke:0.42px #ffffff;">Black and White</span>
<svg style="left:983.5px;top:706.0px;" width="16" height="11" viewBox="0 0 16 11"><path d="M1.500 1.500L8 8 14.500 1.500" fill="none" stroke="#ffffff" stroke-width="2.200"/></svg>
<span style="left:582.9px;top:752.4px;font-size:22.5px;line-height:22.5px;color:#7c7c7c;letter-spacing:-0.81px;-webkit-text-stroke:0.42px #7c7c7c;">Palette:</span>
<div style="left:660.3px;top:742.8px;width:349.0px;height:40.2px;background:#5c5c5c;border-radius:5px;"></div>
<span style="left:674.4px;top:752.4px;font-size:22.5px;line-height:22.5px;color:#7c7c7c;letter-spacing:-0.29px;-webkit-text-stroke:0.42px #7c7c7c;">Limited</span>
<svg style="left:983.5px;top:757.9px;" width="16" height="11" viewBox="0 0 16 11"><path d="M1.500 1.500L8 8 14.500 1.500" fill="none" stroke="#6c6c6c" stroke-width="2.200"/></svg>
<svg style="left:1031.5px;top:589.5px;" width="25" height="15" viewBox="0 0 25 15"><path d="M7 1.500H25M7 7.500H25M7 13.500H25" stroke="#c6c6c6" stroke-width="2"/><rect x="0" y="0.500" width="2.500" height="2.500" fill="#c6c6c6"/><rect x="0" y="6.500" width="2.500" height="2.500" fill="#c6c6c6"/><rect x="0" y="12.500" width="2.500" height="2.500" fill="#c6c6c6"/></svg>
<svg style="left:1030.0px;top:648.0px;" width="27" height="17" viewBox="0 0 27 17"><path d="M0.500 8.500Q6 0.500 13.500 0.500Q21 0.500 26.500 8.500Q21 16.500 13.500 16.500Q6 16.500 0.500 8.500Z" fill="#c6c6c6"/><circle cx="13.500" cy="8.500" r="6.300" fill="#535353"/><circle cx="13.500" cy="8.500" r="3.800" fill="#c6c6c6"/><circle cx="11.800" cy="6.800" r="1.700" fill="#535353"/></svg>
<span style="left:550.2px;top:804.0px;font-size:22.5px;line-height:22.5px;color:#d0d0d0;letter-spacing:-0.38px;-webkit-text-stroke:0.42px #d0d0d0;">Threshold:</span>
<div style="left:662.0px;top:812.5px;width:297.8px;height:3.0px;background:#6c6c6c;border-radius:1.500px;"></div>
<div style="left:799.6px;top:802.0px;width:24.0px;height:24.0px;background:#535353;border-radius:50%;border:3.500px solid #c6c6c6;box-shadow:0 0 0 3px #535353;"></div>
<div style="left:973.2px;top:795.4px;width:83.6px;height:37.2px;background:#424242;border:1.500px solid #626262;border-radius:5px;"></div>
<span style="left:983.9px;top:802.0px;font-size:22.5px;line-height:22.5px;color:#ffffff;letter-spacing:-0.85px;-webkit-text-stroke:0.42px #ffffff;">128</span>
<span style="left:660.3px;top:836.0px;font-size:22.5px;line-height:22.5px;color:#d0d0d0;letter-spacing:-1.73px;-webkit-text-stroke:0.42px #d0d0d0;">Less</span>
<span style="left:913.0px;top:836.0px;font-size:22.5px;line-height:22.5px;color:#d0d0d0;letter-spacing:-1.12px;-webkit-text-stroke:0.42px #d0d0d0;">More</span>
<svg style="left:560.0px;top:883.0px;" width="23" height="13" viewBox="0 0 23 13"><path d="M0 0H22.500L11.200 12.500Z" fill="#c6c6c6"/></svg>
<span style="left:592.5px;top:879.0px;font-size:22.5px;line-height:22.5px;color:#d0d0d0;letter-spacing:-0.91px;-webkit-text-stroke:0.42px #d0d0d0;">Advanced</span>
<div style="left:689.0px;top:886.7px;width:379.0px;height:1.6px;background:#4a4a4a;"></div>
<span style="left:595.3px;top:930.1px;font-size:22.5px;line-height:22.5px;color:#d0d0d0;letter-spacing:-1.06px;-webkit-text-stroke:0.42px #d0d0d0;">Paths:</span>
<div style="left:662.0px;top:938.6px;width:297.8px;height:3.0px;background:#6c6c6c;border-radius:1.500px;"></div>
<div style="left:937.8px;top:928.1px;width:24.0px;height:24.0px;background:#535353;border-radius:50%;border:3.500px solid #c6c6c6;box-shadow:0 0 0 3px #535353;"></div>
<div style="left:973.2px;top:921.5px;width:83.6px;height:37.2px;background:#424242;border:1.500px solid #626262;border-radius:5px;"></div>
<span style="left:983.9px;top:928.1px;font-size:22.5px;line-height:22.5px;color:#ffffff;letter-spacing:-2.01px;-webkit-text-stroke:0.42px #ffffff;">100%</span>
<span style="left:660.3px;top:962.1px;font-size:22.5px;line-height:22.5px;color:#d0d0d0;letter-spacing:-1.26px;-webkit-text-stroke:0.42px #d0d0d0;">Low</span>
<span style="left:916.8px;top:962.1px;font-size:22.5px;line-height:22.5px;color:#d0d0d0;letter-spacing:-0.82px;-webkit-text-stroke:0.42px #d0d0d0;">High</span>
<span style="left:571.2px;top:1004.0px;font-size:22.5px;line-height:22.5px;color:#d0d0d0;letter-spacing:-0.60px;-webkit-text-stroke:0.42px #d0d0d0;">Corners:</span>
<div style="left:662.0px;top:1012.5px;width:297.8px;height:3.0px;background:#6c6c6c;border-radius:1.500px;"></div>
<div style="left:937.8px;top:1002.0px;width:24.0px;height:24.0px;background:#535353;border-radius:50%;border:3.500px solid #c6c6c6;box-shadow:0 0 0 3px #535353;"></div>
<div style="left:973.2px;top:995.4px;width:83.6px;height:37.2px;background:#424242;border:1.500px solid #626262;border-radius:5px;"></div>
<span style="left:983.9px;top:1002.0px;font-size:22.5px;line-height:22.5px;color:#ffffff;letter-spacing:-2.01px;-webkit-text-stroke:0.42px #ffffff;">100%</span>
<span style="left:660.3px;top:1036.0px;font-size:22.5px;line-height:22.5px;color:#d0d0d0;letter-spacing:-1.73px;-webkit-text-stroke:0.42px #d0d0d0;">Less</span>
<span style="left:913.0px;top:1036.0px;font-size:22.5px;line-height:22.5px;color:#d0d0d0;letter-spacing:-1.12px;-webkit-text-stroke:0.42px #d0d0d0;">More</span>
<span style="left:593.6px;top:1078.0px;font-size:22.5px;line-height:22.5px;color:#d0d0d0;letter-spacing:-0.78px;-webkit-text-stroke:0.42px #d0d0d0;">Noise:</span>
<div style="left:662.0px;top:1086.5px;width:297.8px;height:3.0px;background:#6c6c6c;border-radius:1.500px;"></div>
<div style="left:660.0px;top:1076.0px;width:24.0px;height:24.0px;background:#535353;border-radius:50%;border:3.500px solid #c6c6c6;box-shadow:0 0 0 3px #535353;"></div>
<div style="left:973.2px;top:1069.4px;width:83.6px;height:37.2px;background:#424242;border:1.500px solid #626262;border-radius:5px;"></div>
<span style="left:983.9px;top:1076.0px;font-size:22.5px;line-height:22.5px;color:#ffffff;letter-spacing:-0.41px;-webkit-text-stroke:0.42px #ffffff;">1 px</span>
<span style="left:660.3px;top:1110.0px;font-size:22.5px;line-height:22.5px;color:#d0d0d0;-webkit-text-stroke:0.42px #d0d0d0;">1</span>
<span style="left:925.4px;top:1110.0px;font-size:22.5px;line-height:22.5px;color:#d0d0d0;letter-spacing:-1.05px;-webkit-text-stroke:0.42px #d0d0d0;">100</span>
<span style="left:574.6px;top:1154.0px;font-size:22.5px;line-height:22.5px;color:#d0d0d0;letter-spacing:-0.46px;-webkit-text-stroke:0.42px #d0d0d0;">Method:</span>
<div style="left:660.8px;top:1142.6px;width:96.7px;height:46.9px;background:#535353;border:1.500px solid #626262;border-radius:5px;"></div>
<div style="left:662.3px;top:1144.1px;width:44.7px;height:43.9px;background:#2d2d2d;border-radius:4px 0 0 4px;"></div>
<div style="left:707.3px;top:1144.1px;width:1.5px;height:43.9px;background:#626262;"></div>
<svg style="left:640px;top:1130px;" width="360" height="160" viewBox="0 0 2420 1076" preserveAspectRatio="none">
<rect x="200" y="148" width="162" height="187" fill="#fff"/><circle cx="283" cy="242" r="56" fill="#2d2d2d"/><circle cx="337" cy="242" r="60" fill="#8a8a8a" stroke="#fff" stroke-width="7"/>
<rect x="538" y="148" width="160" height="187" fill="#c6c6c6"/><circle cx="675" cy="242" r="58" fill="#6e6e6e" stroke="#c6c6c6" stroke-width="7"/>
</svg>
<div style="left:549.7px;top:1208.0px;width:12.0px;height:12.0px;background:#2e72e8;border-radius:50%;"></div>
<span style="left:572.2px;top:1203.8px;font-size:22.5px;line-height:22.5px;color:#d0d0d0;letter-spacing:-0.99px;-webkit-text-stroke:0.42px #d0d0d0;">Create</span>
<div style="left:645.8px;top:1213.2px;width:411.7px;height:1.6px;background:#4a4a4a;"></div>
<div style="left:574.0px;top:1248.3px;width:23.5px;height:23.5px;background:#c6c6c6;border-radius:4px;"></div>
<svg style="left:574.0px;top:1248.3px;" width="24" height="24" viewBox="0 0 24 24"><path d="M5 12.800L10.300 18.200L19.500 6.800" fill="none" stroke="#444" stroke-width="2.900"/></svg>
<span style="left:608.3px;top:1249.5px;font-size:22.5px;line-height:22.5px;color:#ffffff;letter-spacing:-0.64px;-webkit-text-stroke:0.42px #ffffff;">Fills</span>
<div style="left:660.5px;top:1248.3px;width:23.5px;height:23.5px;background:#535353;border-radius:4px;border:2px solid #c6c6c6;"></div>
<span style="left:694.3px;top:1249.5px;font-size:22.5px;line-height:22.5px;color:#ffffff;letter-spacing:-0.84px;-webkit-text-stroke:0.42px #ffffff;">Strokes</span>
<div style="left:776.1px;top:1240.4px;width:155.5px;height:41.3px;background:#5c5c5c;border-radius:6px;"></div>
<div style="left:812.0px;top:1242.0px;width:1.5px;height:38.0px;background:#565656;"></div>
<svg style="left:787.0px;top:1246.0px;" width="18" height="30" viewBox="0 0 18 30"><path d="M2 9L9 2.500 16 9M2 21L9 27.500 16 21" fill="none" stroke="#707070" stroke-width="1.800"/></svg>
<span style="left:822.2px;top:1250.0px;font-size:22.5px;line-height:22.5px;color:#6b6b6b;letter-spacing:-0.45px;-webkit-text-stroke:0.42px #6b6b6b;">10 px</span>
<div style="left:574.0px;top:1294.7px;width:23.5px;height:23.5px;background:#535353;border-radius:4px;border:2px solid #6f6f6f;"></div>
<span style="left:608.3px;top:1296.0px;font-size:22.5px;line-height:22.5px;color:#7c7c7c;letter-spacing:-0.67px;-webkit-text-stroke:0.42px #7c7c7c;">Gradients</span>
<span style="left:573.6px;top:1341.6px;font-size:22.5px;line-height:22.5px;color:#7c7c7c;letter-spacing:-0.67px;-webkit-text-stroke:0.42px #7c7c7c;">Smooth:</span>
<div style="left:662.0px;top:1350.1px;width:296.0px;height:3.0px;background:#646464;border-radius:1.500px;"></div>
<div style="left:660.0px;top:1339.6px;width:24.0px;height:24.0px;background:#535353;border-radius:50%;border:3.500px solid #707070;box-shadow:0 0 0 3px #535353;"></div>
<div style="left:971.0px;top:1332.6px;width:85.0px;height:38.0px;background:#5c5c5c;border-radius:5px;"></div>
<span style="left:983.5px;top:1339.6px;font-size:22.5px;line-height:22.5px;color:#6b6b6b;letter-spacing:-4.26px;-webkit-text-stroke:0.42px #6b6b6b;">1%</span>
<span style="left:660.8px;top:1373.6px;font-size:22.5px;line-height:22.5px;color:#7c7c7c;letter-spacing:-0.72px;-webkit-text-stroke:0.42px #7c7c7c;">Min</span>
<span style="left:918.6px;top:1373.6px;font-size:22.5px;line-height:22.5px;color:#7c7c7c;letter-spacing:-1.27px;-webkit-text-stroke:0.42px #7c7c7c;">Max</span>
<div style="left:574.0px;top:1408.5px;width:23.5px;height:23.5px;background:#c6c6c6;border-radius:4px;"></div>
<svg style="left:574.0px;top:1408.5px;" width="24" height="24" viewBox="0 0 24 24"><path d="M5 12.800L10.300 18.200L19.500 6.800" fill="none" stroke="#444" stroke-width="2.900"/></svg>
<span style="left:608.2px;top:1410.0px;font-size:22.5px;line-height:22.5px;color:#ffffff;letter-spacing:-1.65px;-webkit-text-stroke:0.42px #ffffff;">Shapes</span>
<div style="left:550.0px;top:1454.5px;width:12.0px;height:12.0px;background:#2e72e8;border-radius:50%;"></div>
<span style="left:572.2px;top:1450.3px;font-size:22.5px;line-height:22.5px;color:#d0d0d0;letter-spacing:-0.38px;-webkit-text-stroke:0.42px #d0d0d0;">Options</span>
<div style="left:660.8px;top:1459.7px;width:396.7px;height:1.6px;background:#4a4a4a;"></div>
<div style="left:574.0px;top:1488.7px;width:23.5px;height:23.5px;background:#c6c6c6;border-radius:4px;"></div>
<svg style="left:574.0px;top:1488.7px;" width="24" height="24" viewBox="0 0 24 24"><path d="M5 12.800L10.300 18.200L19.500 6.800" fill="none" stroke="#444" stroke-width="2.900"/></svg>
<span style="left:608.2px;top:1489.8px;font-size:22.5px;line-height:22.5px;color:#ffffff;letter-spacing:-0.71px;-webkit-text-stroke:0.42px #ffffff;">Snap Curves To Lines</span>
<div style="left:574.0px;top:1528.5px;width:23.5px;height:23.5px;background:#535353;border-radius:4px;border:2px solid #6f6f6f;"></div>
<span style="left:608.2px;top:1530.0px;font-size:22.5px;line-height:22.5px;color:#7c7c7c;letter-spacing:-0.55px;-webkit-text-stroke:0.42px #7c7c7c;">Transparency</span>
<div style="left:574.0px;top:1568.5px;width:23.5px;height:23.5px;background:#c6c6c6;border-radius:4px;"></div>
<svg style="left:574.0px;top:1568.5px;" width="24" height="24" viewBox="0 0 24 24"><path d="M5 12.800L10.300 18.200L19.500 6.800" fill="none" stroke="#444" stroke-width="2.900"/></svg>
<span style="left:608.2px;top:1570.0px;font-size:22.5px;line-height:22.5px;color:#ffffff;letter-spacing:-0.28px;-webkit-text-stroke:0.42px #ffffff;">Ignore Color</span>
<div style="left:749.8px;top:1564.4px;width:66.3px;height:35.3px;background:#fff;"></div>
<svg style="left:832.2px;top:1562.8px;" width="43.8" height="43.8" viewBox="0 0 100 100" preserveAspectRatio="none">
<path d="M70 12Q80 8 86 16Q92 26 82 34L76 40L80 46L70 56L46 32L56 22L62 26Z" fill="#c6c6c6"/>
<path d="M54 42L22 74Q16 78 15 86Q22 88 28 82L60 50" fill="none" stroke="#c6c6c6" stroke-width="5" stroke-linejoin="round"/></svg>
<div style="left:550.3px;top:1619.6px;width:517.0px;height:1.6px;background:#4a4a4a;"></div>
<span style="left:572.1px;top:1645.0px;font-size:22.5px;line-height:22.5px;color:#d0d0d0;letter-spacing:-0.22px;-webkit-text-stroke:0.42px #d0d0d0;">Info:</span>
<svg style="left:625px;top:1640px;" width="40" height="32" viewBox="0 0 80 64" preserveAspectRatio="none"><rect x="9" y="4" width="10" height="10" fill="#c6c6c6"/><rect x="48" y="46" width="10" height="10" fill="#c6c6c6"/><path d="M18 9Q52 10 53 48" fill="none" stroke="#c6c6c6" stroke-width="4"/></svg>
<span style="left:663.5px;top:1645.0px;font-size:22.5px;line-height:22.5px;color:#d0d0d0;-webkit-text-stroke:0.42px #d0d0d0;">12</span>
<svg style="left:772px;top:1640px;" width="30" height="32" viewBox="0 0 60 64" preserveAspectRatio="none"><rect x="32" y="10" width="12" height="14" fill="#c6c6c6"/><path d="M8 12Q30 10 40 16Q48 30 50 54" fill="none" stroke="#c6c6c6" stroke-width="4"/></svg>
<span style="left:808.5px;top:1645.0px;font-size:22.5px;line-height:22.5px;color:#d0d0d0;-webkit-text-stroke:0.42px #d0d0d0;">363</span>
<svg style="left:924.3px;top:1645.0px;" width="22" height="22" viewBox="0 0 22 22"><rect x="1" y="1" width="20" height="20" fill="#6e6e6e" stroke="#c6c6c6" stroke-width="2"/><path d="M11 1V21M1 11H21" stroke="#c6c6c6" stroke-width="2"/></svg>
<span style="left:955.0px;top:1645.0px;font-size:22.5px;line-height:22.5px;color:#d0d0d0;-webkit-text-stroke:0.42px #d0d0d0;">1</span>
<div style="left:550.3px;top:1690.6px;width:517.0px;height:1.6px;background:#4a4a4a;"></div>
<div style="left:550.0px;top:1717.6px;width:12.0px;height:12.0px;background:#2e72e8;border-radius:50%;"></div>
<div style="left:574.0px;top:1710.3px;width:23.5px;height:23.5px;background:#c6c6c6;border-radius:4px;"></div>
<svg style="left:574.0px;top:1710.3px;" width="24" height="24" viewBox="0 0 24 24"><path d="M5 12.800L10.300 18.200L19.500 6.800" fill="none" stroke="#444" stroke-width="2.900"/></svg>
<span style="left:608.2px;top:1712.0px;font-size:22.5px;line-height:22.5px;color:#ffffff;letter-spacing:-0.27px;-webkit-text-stroke:0.42px #ffffff;">Auto Grouping</span>
<div style="left:778.5px;top:1704.4px;width:279.3px;height:37.3px;background:#535353;border:2px solid #8c8c8c;border-radius:5px;"></div>
<span style="left:882.1px;top:1712.5px;font-size:22.5px;line-height:22.5px;color:#ffffff;letter-spacing:-0.97px;-webkit-text-stroke:0.42px #ffffff;">Expand</span>
<div style="left:550.3px;top:1753.5px;width:517.0px;height:1.6px;background:#4a4a4a;"></div>
<div style="left:574.0px;top:1772.4px;width:23.5px;height:23.5px;background:#c6c6c6;border-radius:4px;"></div>
<svg style="left:574.0px;top:1772.4px;" width="24" height="24" viewBox="0 0 24 24"><path d="M5 12.800L10.300 18.200L19.500 6.800" fill="none" stroke="#444" stroke-width="2.900"/></svg>
<span style="left:608.2px;top:1774.0px;font-size:22.5px;line-height:22.5px;color:#ffffff;letter-spacing:-1.05px;-webkit-text-stroke:0.42px #ffffff;">Preview</span>
<div style="left:778.5px;top:1766.6px;width:279.3px;height:36.8px;background:#5c5c5c;border-radius:5px;"></div>
<span style="left:891.1px;top:1775.0px;font-size:22.5px;line-height:22.5px;color:#858585;letter-spacing:-0.84px;-webkit-text-stroke:0.42px #858585;">Trace</span>
<div style="left:550.3px;top:1815.0px;width:517.0px;height:1.6px;background:#4a4a4a;"></div>
<svg style="left:572.0px;top:1836.5px;" width="24" height="24" viewBox="0 0 24 24"><circle cx="12" cy="12" r="10.800" fill="none" stroke="#c6c6c6" stroke-width="1.800"/><circle cx="12" cy="6.800" r="1.700" fill="#c6c6c6"/><path d="M9.500 10.500h3.700v7M9 17.800h7" fill="none" stroke="#c6c6c6" stroke-width="2"/></svg>
<svg style="left:615.5px;top:1838.0px;" width="24" height="23" viewBox="0 0 24 23"><path d="M3 0.500H20Q23 0.500 23 3.500V13Q23 16 20 16H12L6 22V16H3Q0.500 16 0.500 13V3.500Q0.500 0.500 3 0.500Z" fill="#c6c6c6"/><circle cx="6.500" cy="8.300" r="1.900" fill="#535353"/><circle cx="11.800" cy="8.300" r="1.900" fill="#535353"/><circle cx="17" cy="8.300" r="1.900" fill="#535353"/></svg>
<div style="left:529.0px;top:1890.5px;width:560.0px;height:2.5px;background:#3a3a3a;"></div>
<svg style="left:790.0px;top:1894.0px;" width="40" height="8" viewBox="0 0 40 8"><rect x="0.0" y="0" width="1.800" height="8" fill="#3e3e3e"/><rect x="3.9" y="0" width="1.800" height="8" fill="#3e3e3e"/><rect x="7.8" y="0" width="1.800" height="8" fill="#3e3e3e"/><rect x="11.7" y="0" width="1.800" height="8" fill="#3e3e3e"/><rect x="15.6" y="0" width="1.800" height="8" fill="#3e3e3e"/><rect x="19.5" y="0" width="1.800" height="8" fill="#3e3e3e"/><rect x="23.4" y="0" width="1.800" height="8" fill="#3e3e3e"/><rect x="27.3" y="0" width="1.800" height="8" fill="#3e3e3e"/><rect x="31.2" y="0" width="1.800" height="8" fill="#3e3e3e"/><rect x="35.1" y="0" width="1.800" height="8" fill="#3e3e3e"/></svg>
<div style="left:2782.5px;top:213.0px;width:578.0px;height:23.5px;background:#424242;"></div>
<div style="left:2782.5px;top:236.0px;width:578.0px;height:2.0px;background:#383838;"></div>
<div style="left:2782.5px;top:238.0px;width:578.0px;height:53.0px;background:#424242;"></div>
<div style="left:2782.5px;top:289.5px;width:578.0px;height:2.0px;background:#383838;"></div>
<div style="left:2923.2px;top:238.0px;width:103.1px;height:54.0px;background:#535353;"></div>
<div style="left:2922.2px;top:238.0px;width:2.0px;height:52.0px;background:#383838;"></div>
<div style="left:3025.8px;top:238.0px;width:2.0px;height:52.0px;background:#383838;"></div>
<div style="left:3149.8px;top:238.0px;width:2.0px;height:52.0px;background:#383838;"></div>
<span style="left:2800.3px;top:252.0px;font-size:21.5px;line-height:21.5px;color:#bdbdbd;font-weight:bold;letter-spacing:-0.16px;">Properties</span>
<span style="left:2942.2px;top:252.0px;font-size:21.5px;line-height:21.5px;color:#ffffff;font-weight:bold;letter-spacing:-0.59px;">Layers</span>
<span style="left:3044.2px;top:252.0px;font-size:21.5px;line-height:21.5px;color:#bdbdbd;font-weight:bold;letter-spacing:-0.11px;">Libraries</span>
<div style="left:2782.5px;top:291.5px;width:578.0px;height:1768.0px;background:#535353;"></div>
<div style="left:2793.0px;top:303.5px;width:580.0px;height:1749.5px;background:#535353;border:1.500px solid #494949;border-radius:5px;"></div>
<div style="left:2804.2px;top:313.3px;width:570.0px;height:45.0px;background:#424242;border:1.500px solid #5f5f5f;border-radius:5px;"></div>
<svg style="left:2817.0px;top:324.0px;" width="25" height="23" viewBox="0 0 25 23"><circle cx="9.500" cy="9.500" r="7.800" fill="none" stroke="#c6c6c6" stroke-width="2.400"/><path d="M15.500 15.500L22.500 21.500" stroke="#c6c6c6" stroke-width="3.400" stroke-linecap="round"/></svg>
<span style="left:2861.5px;top:323.0px;font-size:24.5px;line-height:24.5px;color:#c4c4c4;font-style:italic;letter-spacing:-2.55px;-webkit-text-stroke:0.35px #c4c4c4;">Search</span>
<span style="left:2931.7px;top:323.0px;font-size:24.5px;line-height:24.5px;color:#c4c4c4;font-style:italic;letter-spacing:-1.38px;-webkit-text-stroke:0.35px #c4c4c4;">All</span>
<div style="left:2793.8px;top:370.5px;width:580.0px;height:1.5px;background:#484848;"></div>
<div style="left:2793.8px;top:377.8px;width:570.0px;height:40.4px;background:#54647a;"></div>
<div style="left:2834.5px;top:378.0px;width:1.5px;height:40.0px;background:#48566a;"></div>
<div style="left:2876.5px;top:378.0px;width:1.5px;height:40.0px;background:#48566a;"></div>
<div style="left:2888.8px;top:378.0px;width:1.5px;height:40.0px;background:#5c6c82;"></div>
<div style="left:2880.2px;top:380.2px;width:6.0px;height:35.4px;background:#5b7df5;"></div>
<svg style="left:2800.8px;top:389.0px;" width="25" height="15" viewBox="0 0 25 15"><path d="M0.500 7.500Q5.500 0.500 12.500 0.500Q19.500 0.500 24.500 7.500Q19.500 14.500 12.500 14.500Q5.500 14.500 0.500 7.500Z" fill="#c6c6c6"/><circle cx="12.500" cy="7.500" r="5.600" fill="#54647a"/><circle cx="12.500" cy="7.500" r="3.400" fill="#c6c6c6"/><circle cx="11" cy="6" r="1.500" fill="#54647a"/></svg>
<svg style="left:2902.5px;top:390.5px;" width="10" height="14" viewBox="0 0 10 14"><path d="M1.500 1L8 7 1.500 13" fill="none" stroke="#fff" stroke-width="2"/></svg>
<div style="left:2937.8px;top:380.0px;width:36.4px;height:35.6px;background:#fff;border:2px solid #000;"></div>
<div style="left:2941.0px;top:382.0px;width:2.6px;height:31.6px;background:#000;"></div>
<div style="left:2968.2px;top:382.0px;width:3.2px;height:31.6px;background:#000;"></div>
<div style="left:2941.0px;top:382.0px;width:30.0px;height:2.2px;background:#000;"></div>
<div style="left:2941.0px;top:411.0px;width:12.5px;height:2.6px;background:#000;"></div>
<div style="left:2960.5px;top:411.0px;width:11.0px;height:2.6px;background:#000;"></div>
<svg style="left:2946.0px;top:402.0px;" width="20" height="9" viewBox="0 0 20 9"><path d="M1 4Q3 7 6 5L8 3L10 6Q13 8 16 5M17 2L18 1.500" fill="none" stroke="#000" stroke-width="0.900"/></svg>
<div style="left:2953.0px;top:386.0px;width:1.2px;height:1.0px;background:#000;"></div>
<div style="left:2957.0px;top:386.0px;width:1.2px;height:1.0px;background:#000;"></div>
<span style="left:2984.3px;top:386.8px;font-size:24px;line-height:24px;color:#f4f4f4;letter-spacing:-2.21px;-webkit-text-stroke:0.4px #f4f4f4;">Layer</span>
<span style="left:3042.9px;top:386.8px;font-size:24px;line-height:24px;color:#f4f4f4;-webkit-text-stroke:0.4px #f4f4f4;">1</span>
<div style="left:2782.5px;top:2059.5px;width:578.0px;height:34.0px;background:#535353;"></div>
<span style="left:2793.2px;top:2062.3px;font-size:24px;line-height:24px;color:#e2e2e2;-webkit-text-stroke:0.4px #e2e2e2;">1</span>
<span style="left:2811.2px;top:2062.3px;font-size:24px;line-height:24px;color:#e2e2e2;letter-spacing:-1.95px;-webkit-text-stroke:0.4px #e2e2e2;">Layer</span>
<svg style="left:2560px;top:1900px;" width="800" height="200" viewBox="0 0 2420 605" preserveAspectRatio="none">
<g fill="none" stroke="#c6c6c6" stroke-width="7"><path d="M1632 502V545M1632 502H1680M1625 495H1690M1632 488V560M1618 548H1665M1682 490V512"/><path d="M1770 510V552H1832V528M1770 510H1790M1805 522L1836 490M1812 488H1838V514"/><circle cx="1950" cy="514" r="24"/><path d="M1968 532L1992 554" stroke-width="10"/></g>
<path d="M1668 512H1700V562L1684 548L1668 562Z" fill="#c6c6c6"/>
<rect x="2084" y="494" width="42" height="42" fill="none" stroke="#6a6a6a" stroke-width="5"/><rect x="2102" y="512" width="42" height="42" fill="#636363" stroke="#6a6a6a" stroke-width="5"/>
<g fill="none" stroke="#c6c6c6" stroke-width="7"><path d="M2232 492V520H2262M2250 506L2264 520L2250 534"/><rect x="2268" y="500" width="46" height="46"/><path d="M2291 510V536M2278 523H2304"/><path d="M2420 494H2404V552H2420"/></g>
</svg>
<div style="left:662.7px;top:2002.3px;width:2034.6px;height:87.2px;background:#8e8e8e;border-radius:17px;box-shadow:inset 0 0 0 1.200px #aaaaaa,0 0 0 1px rgba(40,40,40,.4),0 4px 26px 6px rgba(0,0,0,.22);"></div>
<div style="left:2224.4px;top:2014.0px;width:1.6px;height:64.0px;background:#4f4f4f;"></div>
<div style="left:2606.1px;top:2014.0px;width:1.6px;height:64.0px;background:#4f4f4f;"></div>
<svg style="left:676.6px;top:2016.6px;" width="52.8" height="52.8" viewBox="0 0 100 100"><defs><clipPath id="c676"><rect x="0" y="0" width="100" height="100" rx="23"/></clipPath></defs><g clip-path="url(#c676)"><defs><linearGradient id="f0" x1="0" y1="0" x2="0" y2="1"><stop offset="0" stop-color="#3fb0f7"/><stop offset="1" stop-color="#2277e6"/></linearGradient><linearGradient id="f0b" x1="0" y1="0" x2="0" y2="1"><stop offset="0" stop-color="#f4f6fa"/><stop offset="1" stop-color="#d5dde8"/></linearGradient></defs><rect width="100" height="100" fill="url(#f0)"/><path d="M55 0H100V100H62Q56 75 57 60H42Q44 25 55 0Z" fill="url(#f0b)"/><path d="M20 70Q48 90 81 68" fill="none" stroke="#1d2a3a" stroke-width="4" stroke-linecap="round"/><rect x="24.500" y="28" width="4.500" height="11" rx="2.200" fill="#1d2a3a"/><rect x="71.500" y="28" width="4.500" height="11" rx="2.200" fill="#1d2a3a"/><path d="M55 0Q43 25 42 60H57" fill="none" stroke="#1d5fb8" stroke-width="1.500" opacity=".5"/></g></svg>
<svg style="left:746.6px;top:2016.6px;" width="52.8" height="52.8" viewBox="0 0 100 100"><defs><clipPath id="c746"><rect x="0" y="0" width="100" height="100" rx="23"/></clipPath></defs><g clip-path="url(#c746)"><defs><linearGradient id="s1" x1="0" y1="0" x2="1" y2="1"><stop offset="0" stop-color="#8a1240"/><stop offset=".450" stop-color="#2a2145"/><stop offset="1" stop-color="#0e3f45"/></linearGradient><radialGradient id="s1o" cx=".5" cy=".5" r=".5"><stop offset="0" stop-color="#fff"/><stop offset=".180" stop-color="#bfe8ff"/><stop offset=".500" stop-color="#3a6fb0" stop-opacity=".7"/><stop offset="1" stop-color="#283060" stop-opacity=".2"/></radialGradient></defs><rect width="100" height="100" fill="url(#s1)"/><circle cx="50" cy="50" r="42" fill="url(#s1o)" opacity=".9"/><ellipse cx="32" cy="52" rx="22" ry="18" fill="#e8396a" opacity=".75"/><ellipse cx="68" cy="60" rx="22" ry="14" fill="#2f9ad8" opacity=".7"/><ellipse cx="55" cy="28" rx="24" ry="12" fill="#3fc98a" opacity=".45"/><circle cx="52" cy="50" r="9" fill="#fff" opacity=".95"/><circle cx="50" cy="50" r="42" fill="none" stroke="#c9d6e8" stroke-width="1.500" opacity=".6"/></g></svg>
<svg style="left:816.6px;top:2016.6px;" width="52.8" height="52.8" viewBox="0 0 100 100"><defs><clipPath id="c816"><rect x="0" y="0" width="100" height="100" rx="23"/></clipPath></defs><g clip-path="url(#c816)"><rect width="100" height="100" fill="#dddddd"/><rect x="16.0" y="17.0" width="19" height="18" rx="4.500" fill="#62d64f"/><rect x="40.5" y="17.0" width="19" height="18" rx="4.500" fill="#f9bb32"/><rect x="65.0" y="17.0" width="19" height="18" rx="4.500" fill="#f3902c"/><rect x="16.0" y="41.5" width="19" height="18" rx="4.500" fill="#d9342a"/><rect x="40.5" y="41.5" width="19" height="18" rx="4.500" fill="#aab4ba"/><rect x="65.0" y="41.5" width="19" height="18" rx="4.500" fill="#ef4e66"/><rect x="16.0" y="66.0" width="19" height="18" rx="4.500" fill="#a450d8"/><rect x="40.5" y="66.0" width="19" height="18" rx="4.500" fill="#2f9cf3"/><rect x="65.0" y="66.0" width="19" height="18" rx="4.500" fill="#61d1b1"/></g></svg>
<svg style="left:886.6px;top:2016.6px;" width="52.8" height="52.8" viewBox="0 0 100 100"><defs><clipPath id="c886"><rect x="0" y="0" width="100" height="100" rx="23"/></clipPath></defs><g clip-path="url(#c886)"><defs><linearGradient id="sf" x1="0" y1="0" x2="0" y2="1"><stop offset="0" stop-color="#ffffff"/><stop offset="1" stop-color="#e9e9e9"/></linearGradient><linearGradient id="sfb" x1="0" y1="0" x2="0" y2="1"><stop offset="0" stop-color="#36a3f3"/><stop offset="1" stop-color="#1f6fe0"/></linearGradient></defs><rect width="100" height="100" fill="url(#sf)"/><circle cx="50" cy="50" r="43.500" fill="url(#sfb)"/><path d="M86.0 50.0L91.0 50.0" stroke="#fff" stroke-width="1.200" opacity=".8"/><path d="M85.5 56.3L90.4 57.1" stroke="#fff" stroke-width="1.200" opacity=".8"/><path d="M83.8 62.3L88.5 64.0" stroke="#fff" stroke-width="1.200" opacity=".8"/><path d="M81.2 68.0L85.5 70.5" stroke="#fff" stroke-width="1.200" opacity=".8"/><path d="M77.6 73.1L81.4 76.4" stroke="#fff" stroke-width="1.200" opacity=".8"/><path d="M73.1 77.6L76.4 81.4" stroke="#fff" stroke-width="1.200" opacity=".8"/><path d="M68.0 81.2L70.5 85.5" stroke="#fff" stroke-width="1.200" opacity=".8"/><path d="M62.3 83.8L64.0 88.5" stroke="#fff" stroke-width="1.200" opacity=".8"/><path d="M56.3 85.5L57.1 90.4" stroke="#fff" stroke-width="1.200" opacity=".8"/><path d="M50.0 86.0L50.0 91.0" stroke="#fff" stroke-width="1.200" opacity=".8"/><path d="M43.7 85.5L42.9 90.4" stroke="#fff" stroke-width="1.200" opacity=".8"/><path d="M37.7 83.8L36.0 88.5" stroke="#fff" stroke-width="1.200" opacity=".8"/><path d="M32.0 81.2L29.5 85.5" stroke="#fff" stroke-width="1.200" opacity=".8"/><path d="M26.9 77.6L23.6 81.4" stroke="#fff" stroke-width="1.200" opacity=".8"/><path d="M22.4 73.1L18.6 76.4" stroke="#fff" stroke-width="1.200" opacity=".8"/><path d="M18.8 68.0L14.5 70.5" stroke="#fff" stroke-width="1.200" opacity=".8"/><path d="M16.2 62.3L11.5 64.0" stroke="#fff" stroke-width="1.200" opacity=".8"/><path d="M14.5 56.3L9.6 57.1" stroke="#fff" stroke-width="1.200" opacity=".8"/><path d="M14.0 50.0L9.0 50.0" stroke="#fff" stroke-width="1.200" opacity=".8"/><path d="M14.5 43.7L9.6 42.9" stroke="#fff" stroke-width="1.200" opacity=".8"/><path d="M16.2 37.7L11.5 36.0" stroke="#fff" stroke-width="1.200" opacity=".8"/><path d="M18.8 32.0L14.5 29.5" stroke="#fff" stroke-width="1.200" opacity=".8"/><path d="M22.4 26.9L18.6 23.6" stroke="#fff" stroke-width="1.200" opacity=".8"/><path d="M26.9 22.4L23.6 18.6" stroke="#fff" stroke-width="1.200" opacity=".8"/><path d="M32.0 18.8L29.5 14.5" stroke="#fff" stroke-width="1.200" opacity=".8"/><path d="M37.7 16.2L36.0 11.5" stroke="#fff" stroke-width="1.200" opacity=".8"/><path d="M43.7 14.5L42.9 9.6" stroke="#fff" stroke-width="1.200" opacity=".8"/><path d="M50.0 14.0L50.0 9.0" stroke="#fff" stroke-width="1.200" opacity=".8"/><path d="M56.3 14.5L57.1 9.6" stroke="#fff" stroke-width="1.200" opacity=".8"/><path d="M62.3 16.2L64.0 11.5" stroke="#fff" stroke-width="1.200" opacity=".8"/><path d="M68.0 18.8L70.5 14.5" stroke="#fff" stroke-width="1.200" opacity=".8"/><path d="M73.1 22.4L76.4 18.6" stroke="#fff" stroke-width="1.200" opacity=".8"/><path d="M77.6 26.9L81.4 23.6" stroke="#fff" stroke-width="1.200" opacity=".8"/><path d="M81.2 32.0L85.5 29.5" stroke="#fff" stroke-width="1.200" opacity=".8"/><path d="M83.8 37.7L88.5 36.0" stroke="#fff" stroke-width="1.200" opacity=".8"/><path d="M85.5 43.7L90.4 42.9" stroke="#fff" stroke-width="1.200" opacity=".8"/><path d="M79 24L45 45L55 55Z" fill="#f0433a"/><path d="M21 76L45 45L55 55Z" fill="#f4f4f4"/></g></svg>
<svg style="left:956.6px;top:2016.6px;" width="52.8" height="52.8" viewBox="0 0 100 100"><defs><clipPath id="c956"><rect x="0" y="0" width="100" height="100" rx="23"/></clipPath></defs><g clip-path="url(#c956)"><defs><linearGradient id="ml" x1="0" y1="0" x2="0" y2="1"><stop offset="0" stop-color="#2079f3"/><stop offset="1" stop-color="#5cc6fb"/></linearGradient><linearGradient id="mle" x1="0" y1="0" x2="0" y2="1"><stop offset="0" stop-color="#ffffff"/><stop offset="1" stop-color="#e4e6ea"/></linearGradient></defs><rect width="100" height="100" fill="url(#ml)"/><rect x="15" y="28" width="70" height="45" rx="6" fill="url(#mle)"/><path d="M16 31L44 56Q50 61 56 56L84 31" fill="none" stroke="#b9bdc4" stroke-width="2"/><path d="M16 71L40 50M84 71L60 50" stroke="#c4c7cc" stroke-width="1.800"/></g></svg>
<svg style="left:1026.6px;top:2016.6px;" width="52.8" height="52.8" viewBox="0 0 100 100"><defs><clipPath id="cbk"><rect x="0" y="0" width="93" height="100" rx="21"/></clipPath></defs><rect x="86" y="18" width="13" height="18" rx="3" fill="#d4d0c8"/><rect x="86" y="34" width="13" height="17" fill="#5fb0ee"/><rect x="86" y="51" width="13" height="17" fill="#f09a37"/><rect x="86" y="68" width="13" height="17" rx="3" fill="#62c95c"/><g clip-path="url(#cbk)"><rect x="0" y="0" width="93" height="100" fill="#b98d52"/><rect x="0" y="0" width="7" height="100" fill="#a98048"/></g><circle cx="50" cy="50" r="30" fill="none" stroke="#9c7540" stroke-width="2.500"/><circle cx="50" cy="41" r="10.500" fill="#a17a44"/><path d="M28 70Q33 56 50 56Q67 56 72 70Q63 80 50 80Q37 80 28 70Z" fill="#a17a44"/></svg>
<svg style="left:1096.6px;top:2016.6px;" width="52.8" height="52.8" viewBox="0 0 100 100"><defs><clipPath id="c1096"><rect x="0" y="0" width="100" height="100" rx="23"/></clipPath></defs><g clip-path="url(#c1096)"><defs><linearGradient id="cl" x1="0" y1="0" x2="0" y2="1"><stop offset="0" stop-color="#ffffff"/><stop offset="1" stop-color="#eeeeee"/></linearGradient></defs><rect width="100" height="100" fill="url(#cl)"/><rect width="100" height="30" fill="#e9493f"/><text x="42" y="25" font-size="20" font-weight="bold" fill="#fff" text-anchor="middle" font-family="Liberation Sans, sans-serif">NOV</text><text x="49" y="85" font-size="60" fill="#1f1f1f" stroke="#f6f6f6" stroke-width="2.200" text-anchor="middle" font-family="Liberation Sans, sans-serif" letter-spacing="-1">12</text></g><circle cx="88" cy="12" r="23" fill="#ea4b3f"/><text x="88" y="22" font-size="29" fill="#fff" text-anchor="middle" font-family="Liberation Sans, sans-serif">1</text></svg>
<svg style="left:1166.6px;top:2016.6px;" width="52.8" height="52.8" viewBox="0 0 100 100"><defs><clipPath id="c1166"><rect x="0" y="0" width="100" height="100" rx="23"/></clipPath></defs><g clip-path="url(#c1166)"><defs><linearGradient id="rm" x1="0" y1="0" x2="0" y2="1"><stop offset="0" stop-color="#ffffff"/><stop offset="1" stop-color="#f1efee"/></linearGradient></defs><rect width="100" height="100" fill="url(#rm)"/><circle cx="19" cy="25.0" r="7.500" fill="none" stroke="#2f7cf6" stroke-width="1.500"/><circle cx="19" cy="25.0" r="4.800" fill="#2f7cf6"/><path d="M37 25.0H89" stroke="#c3c6d0" stroke-width="1.500"/><circle cx="19" cy="50.5" r="7.500" fill="none" stroke="#ea3d36" stroke-width="1.500"/><circle cx="19" cy="50.5" r="4.800" fill="#ea3d36"/><path d="M37 50.5H89" stroke="#c3c6d0" stroke-width="1.500"/><circle cx="19" cy="76.0" r="7.500" fill="none" stroke="#f09a2e" stroke-width="1.500"/><circle cx="19" cy="76.0" r="4.800" fill="#f09a2e"/><path d="M37 76.0H89" stroke="#c3c6d0" stroke-width="1.500"/></g></svg>
<svg style="left:1236.6px;top:2016.6px;" width="52.8" height="52.8" viewBox="0 0 100 100"><defs><linearGradient id="cd" x1="0" y1="0" x2="0" y2="1"><stop offset="0" stop-color="#fad84a"/><stop offset="1" stop-color="#f2bd2c"/></linearGradient><linearGradient id="cdb" x1="0" y1="0" x2="0" y2="1"><stop offset="0" stop-color="#f59a2c"/><stop offset="1" stop-color="#e86a1a"/></linearGradient></defs><path d="M23 4H58Q66 -8 70 -6Q70 2 74 4H77Q100 4 100 27V77Q100 100 77 100H23Q0 100 0 77V27Q0 4 23 4Z" fill="url(#cd)"/><circle cx="30" cy="40" r="9.500" fill="#f7f3e6"/><circle cx="70" cy="40" r="9.500" fill="#f7f3e6"/><circle cx="31" cy="40" r="4" fill="#1a1a1a"/><circle cx="71" cy="40" r="4" fill="#1a1a1a"/><path d="M22 68Q35 58 45 51Q50 48 55 51Q65 58 78 68Q72 80 50 80Q28 80 22 68Z" fill="url(#cdb)"/><path d="M22 68Q50 76 78 68" fill="none" stroke="#c9560f" stroke-width="1.500"/></svg>
<svg style="left:1306.6px;top:2016.6px;" width="52.8" height="52.8" viewBox="0 0 100 100"><defs><clipPath id="c1306"><rect x="0" y="0" width="100" height="100" rx="23"/></clipPath></defs><g clip-path="url(#c1306)"><rect width="100" height="100" fill="#6dce6a"/><path d="M0 40L55 100H100V70L40 0H0Z" fill="#f2f2f2"/><path d="M0 45V100H22V65Z" fill="#e987c8"/><path d="M55 100H100V82L72 72Z" fill="#f7cc45"/><rect x="30" y="0" width="18" height="100" fill="#2f83f0"/><rect x="25" y="0" width="5" height="100" fill="#f2f2f2"/><rect x="48" y="0" width="5" height="100" fill="#f2f2f2"/><circle cx="82" cy="8" r="22" fill="none" stroke="#d7d8dc" stroke-width="9"/><circle cx="38" cy="62" r="24" fill="#f4f4f4"/><circle cx="38" cy="62" r="20" fill="#2f83f0"/><path d="M38 46L50 74L38 68L26 74Z" fill="#fff"/></g></svg>
<svg style="left:1376.6px;top:2016.6px;" width="52.8" height="52.8" viewBox="0 0 100 100"><defs><clipPath id="c1376"><rect x="0" y="0" width="100" height="100" rx="23"/></clipPath></defs><g clip-path="url(#c1376)"><defs><linearGradient id="ph" x1="0" y1="0" x2="0" y2="1"><stop offset="0" stop-color="#ffffff"/><stop offset="1" stop-color="#f0f0f0"/></linearGradient></defs><rect width="100" height="100" fill="url(#ph)"/><ellipse cx="50" cy="28" rx="12.500" ry="20" fill="#f19a38" opacity=".85" transform="rotate(0 50 50)"/><ellipse cx="50" cy="28" rx="12.500" ry="20" fill="#f2cf3a" opacity=".85" transform="rotate(45 50 50)"/><ellipse cx="50" cy="28" rx="12.500" ry="20" fill="#b9d24a" opacity=".85" transform="rotate(90 50 50)"/><ellipse cx="50" cy="28" rx="12.500" ry="20" fill="#5fbf7a" opacity=".85" transform="rotate(135 50 50)"/><ellipse cx="50" cy="28" rx="12.500" ry="20" fill="#57a9d8" opacity=".85" transform="rotate(180 50 50)"/><ellipse cx="50" cy="28" rx="12.500" ry="20" fill="#6a7fd0" opacity=".85" transform="rotate(225 50 50)"/><ellipse cx="50" cy="28" rx="12.500" ry="20" fill="#a06bc7" opacity=".85" transform="rotate(270 50 50)"/><ellipse cx="50" cy="28" rx="12.500" ry="20" fill="#e05a5a" opacity=".85" transform="rotate(315 50 50)"/></g></svg>
<svg style="left:1446.6px;top:2016.6px;" width="52.8" height="52.8" viewBox="0 0 100 100"><defs><clipPath id="c1446"><rect x="0" y="0" width="100" height="100" rx="23"/></clipPath></defs><g clip-path="url(#c1446)"><defs><linearGradient id="ms" x1="0" y1="0" x2="0" y2="1"><stop offset="0" stop-color="#6fe577"/><stop offset="1" stop-color="#35c648"/></linearGradient><linearGradient id="msb" x1="0" y1="0" x2="0" y2="1"><stop offset="0" stop-color="#ffffff"/><stop offset="1" stop-color="#d9f2dc"/></linearGradient></defs><rect width="100" height="100" fill="url(#ms)"/><ellipse cx="50" cy="46" rx="36" ry="29" fill="url(#msb)"/><path d="M26 66Q26 78 18 82Q32 82 40 72Z" fill="#e2f5e4"/></g></svg>
<svg style="left:1516.6px;top:2016.6px;" width="52.8" height="52.8" viewBox="0 0 100 100"><defs><clipPath id="c1516"><rect x="0" y="0" width="100" height="100" rx="23"/></clipPath></defs><g clip-path="url(#c1516)"><defs><linearGradient id="ft" x1="0" y1="0" x2="0" y2="1"><stop offset="0" stop-color="#72e57a"/><stop offset="1" stop-color="#35c648"/></linearGradient><linearGradient id="ftb" x1="0" y1="0" x2="0" y2="1"><stop offset="0" stop-color="#ffffff"/><stop offset="1" stop-color="#dcefdc"/></linearGradient></defs><rect width="100" height="100" fill="url(#ft)"/><rect x="14" y="30" width="48" height="42" rx="12" fill="url(#ftb)"/><path d="M66 46L82 32Q85 30 85 35V67Q85 72 82 70L66 56Z" fill="#e6f4e6"/></g></svg>
<svg style="left:1586.6px;top:2016.6px;" width="52.8" height="52.8" viewBox="0 0 100 100"><defs><clipPath id="c1586"><rect x="0" y="0" width="100" height="100" rx="23"/></clipPath></defs><g clip-path="url(#c1586)"><defs><linearGradient id="nb" x1="0" y1="0" x2="0" y2="1"><stop offset="0" stop-color="#8ff07e"/><stop offset="1" stop-color="#3fc943"/></linearGradient></defs><rect width="100" height="100" fill="url(#nb)"/><rect x="18" y="66" width="11" height="20" rx="2" fill="#f1f5f1"/><rect x="36" y="48" width="11" height="38" rx="2" fill="#f1f5f1"/><rect x="54" y="15" width="11" height="71" rx="2" fill="#f1f5f1"/><rect x="72" y="33" width="11" height="53" rx="2" fill="#f1f5f1"/></g></svg>
<svg style="left:1656.6px;top:2016.6px;" width="52.8" height="52.8" viewBox="0 0 100 100"><defs><clipPath id="c1656"><rect x="0" y="0" width="100" height="100" rx="23"/></clipPath></defs><g clip-path="url(#c1656)"><rect width="100" height="100" fill="#fdfaf5"/><path d="M6 38H94" stroke="#f6d7b8" stroke-width="1.200"/><path d="M6 47H94" stroke="#f6d7b8" stroke-width="1.200"/><path d="M6 56H94" stroke="#f6d7b8" stroke-width="1.200"/><path d="M6 65H94" stroke="#f6d7b8" stroke-width="1.200"/><path d="M6 74H94" stroke="#f6d7b8" stroke-width="1.200"/><path d="M6 83H94" stroke="#f6d7b8" stroke-width="1.200"/><path d="M6 92H94" stroke="#f6d7b8" stroke-width="1.200"/><text x="8" y="52" font-size="64" font-weight="bold" fill="#f09a35" font-family="Liberation Serif, serif">“</text><path d="M76 8L82 12L50 72L42 68Z" fill="#f29a1f"/><path d="M74 10L77 12L46 70L43 68Z" fill="#fbc872"/><path d="M50 72L42 68L34 84L38 86Z" fill="#2b2b2b"/><path d="M34 84L38 86L30 94Z" fill="#c9c9c9"/></g></svg>
<svg style="left:1726.6px;top:2016.6px;" width="52.8" height="52.8" viewBox="0 0 100 100"><defs><clipPath id="c1726"><rect x="0" y="0" width="100" height="100" rx="23"/></clipPath></defs><g clip-path="url(#c1726)"><defs><linearGradient id="kn" x1="0" y1="0" x2="0" y2="1"><stop offset="0" stop-color="#4fc0fb"/><stop offset="1" stop-color="#2a72ea"/></linearGradient></defs><rect width="100" height="100" fill="url(#kn)"/><path d="M27 16H73L79 40H21Z" fill="#f3f5f8"/><rect x="21" y="40" width="58" height="4" fill="#c8ced6"/><rect x="48.500" y="44" width="3.500" height="40" fill="#e6e9ee"/><rect x="33" y="83" width="34" height="3.500" rx="1.500" fill="#e6e9ee"/><circle cx="50" cy="27" r="9" fill="#f0b53a"/><path d="M50 27L50 18A9 9 0 0 1 58 31Z" fill="#5ab0e8"/><path d="M50 27L58 31A9 9 0 0 1 44 34Z" fill="#6cc55a"/><path d="M50 27L42 23A9 9 0 0 1 50 18Z" fill="#e0463a"/></g></svg>
<svg style="left:1796.6px;top:2016.6px;" width="52.8" height="52.8" viewBox="0 0 100 100"><defs><clipPath id="c1796"><rect x="0" y="0" width="100" height="100" rx="23"/></clipPath></defs><g clip-path="url(#c1796)"><defs><linearGradient id="mu" x1="0" y1="0" x2="0" y2="1"><stop offset="0" stop-color="#f0606e"/><stop offset="1" stop-color="#e83a48"/></linearGradient></defs><rect width="100" height="100" fill="url(#mu)"/><path d="M38 24L72 16V66A11 9 0 1 1 64 58V32L46 36V74A11 9 0 1 1 38 66Z" fill="#fff"/></g></svg>
<svg style="left:1866.6px;top:2016.6px;" width="52.8" height="52.8" viewBox="0 0 100 100"><defs><clipPath id="c1866"><rect x="0" y="0" width="100" height="100" rx="23"/></clipPath></defs><g clip-path="url(#c1866)"><defs><linearGradient id="pd" x1="0" y1="0" x2="0" y2="1"><stop offset="0" stop-color="#b45cf0"/><stop offset="1" stop-color="#6f2fb5"/></linearGradient></defs><rect width="100" height="100" fill="url(#pd)"/><path d="M28 74A34 34 0 1 1 72 74" fill="none" stroke="#fff" stroke-width="5"/><path d="M35 62A22 22 0 1 1 65 62" fill="none" stroke="#fff" stroke-width="5"/><circle cx="50" cy="45" r="8.500" fill="#fff"/><path d="M43 62Q43 57 50 57Q57 57 57 62L54 86Q53 89 50 89Q47 89 46 86Z" fill="#fff"/></g></svg>
<svg style="left:1936.6px;top:2016.6px;" width="52.8" height="52.8" viewBox="0 0 100 100"><defs><clipPath id="c1936"><rect x="0" y="0" width="100" height="100" rx="23"/></clipPath></defs><g clip-path="url(#c1936)"><defs><linearGradient id="tv" x1="0" y1="0" x2="0" y2="1"><stop offset="0" stop-color="#27302e"/><stop offset="1" stop-color="#0c1413"/></linearGradient></defs><rect width="100" height="100" fill="url(#tv)"/><path d="M33 38c2-2.500 3-5 2.800-7.500-2.500.2-5 1.600-6.500 3.600-1.500 1.800-2.700 4.400-2.300 7 2.600.1 4.700-1.200 6-3.100zM36 43c-3.600-.3-6.600 2-8.300 2-1.700 0-4.400-1.900-7.200-1.900-3.700.1-7.100 2.200-9 5.600-3.900 6.700-1 16.600 2.700 22 1.800 2.700 4 5.700 7 5.600 2.700-.1 3.800-1.800 7.200-1.800s4.300 1.800 7.200 1.700c3 0 4.900-2.700 6.700-5.400 2.100-3.100 3-6.100 3-6.200-.1 0-5.800-2.200-5.800-8.800 0-5.500 4.500-8.100 4.700-8.300-2.600-3.800-6.600-4.300-8.200-4.500z" fill="#fff" transform="translate(2,-2)"/><path d="M56 36V66Q56 72 62 71" fill="none" stroke="#fff" stroke-width="5"/><path d="M49 46H66" stroke="#fff" stroke-width="4.500"/><path d="M69 46L77 70L86 46" fill="none" stroke="#fff" stroke-width="5" stroke-linejoin="round"/></g></svg>
<svg style="left:2006.6px;top:2016.6px;" width="52.8" height="52.8" viewBox="0 0 100 100"><defs><clipPath id="c2006"><rect x="0" y="0" width="100" height="100" rx="23"/></clipPath></defs><g clip-path="url(#c2006)"><defs><linearGradient id="as" x1="0" y1="0" x2="0" y2="1"><stop offset="0" stop-color="#3ea9f6"/><stop offset="1" stop-color="#2468e6"/></linearGradient></defs><rect width="100" height="100" fill="url(#as)"/><path d="M54 20L30 72M46 20L74 78M16 62H84" fill="none" stroke="#fff" stroke-width="7.500" stroke-linecap="round"/><path d="M24 72L20 80" stroke="#fff" stroke-width="7.500" stroke-linecap="round"/></g><circle cx="88" cy="12" r="23" fill="#ea4b3f"/><text x="88" y="22" font-size="29" fill="#fff" text-anchor="middle" font-family="Liberation Sans, sans-serif">4</text></svg>
<svg style="left:2076.6px;top:2016.6px;" width="52.8" height="52.8" viewBox="0 0 100 100"><defs><clipPath id="c2076"><rect x="0" y="0" width="100" height="100" rx="23"/></clipPath></defs><g clip-path="url(#c2076)"><defs><linearGradient id="st" x1="0" y1="0" x2="0" y2="1"><stop offset="0" stop-color="#dfe1e4"/><stop offset="1" stop-color="#9a9ca0"/></linearGradient></defs><rect width="100" height="100" fill="url(#st)"/><circle cx="50" cy="50" r="40" fill="#5a5a5a"/><path d="M88.0 50.0L93.0 50.0" stroke="#3f3f3f" stroke-width="3"/><path d="M87.7 55.0L92.6 55.6" stroke="#3f3f3f" stroke-width="3"/><path d="M86.7 59.8L91.5 61.1" stroke="#3f3f3f" stroke-width="3"/><path d="M85.1 64.5L89.7 66.5" stroke="#3f3f3f" stroke-width="3"/><path d="M82.9 69.0L87.2 71.5" stroke="#3f3f3f" stroke-width="3"/><path d="M80.1 73.1L84.1 76.2" stroke="#3f3f3f" stroke-width="3"/><path d="M76.9 76.9L80.4 80.4" stroke="#3f3f3f" stroke-width="3"/><path d="M73.1 80.1L76.2 84.1" stroke="#3f3f3f" stroke-width="3"/><path d="M69.0 82.9L71.5 87.2" stroke="#3f3f3f" stroke-width="3"/><path d="M64.5 85.1L66.5 89.7" stroke="#3f3f3f" stroke-width="3"/><path d="M59.8 86.7L61.1 91.5" stroke="#3f3f3f" stroke-width="3"/><path d="M55.0 87.7L55.6 92.6" stroke="#3f3f3f" stroke-width="3"/><path d="M50.0 88.0L50.0 93.0" stroke="#3f3f3f" stroke-width="3"/><path d="M45.0 87.7L44.4 92.6" stroke="#3f3f3f" stroke-width="3"/><path d="M40.2 86.7L38.9 91.5" stroke="#3f3f3f" stroke-width="3"/><path d="M35.5 85.1L33.5 89.7" stroke="#3f3f3f" stroke-width="3"/><path d="M31.0 82.9L28.5 87.2" stroke="#3f3f3f" stroke-width="3"/><path d="M26.9 80.1L23.8 84.1" stroke="#3f3f3f" stroke-width="3"/><path d="M23.1 76.9L19.6 80.4" stroke="#3f3f3f" stroke-width="3"/><path d="M19.9 73.1L15.9 76.2" stroke="#3f3f3f" stroke-width="3"/><path d="M17.1 69.0L12.8 71.5" stroke="#3f3f3f" stroke-width="3"/><path d="M14.9 64.5L10.3 66.5" stroke="#3f3f3f" stroke-width="3"/><path d="M13.3 59.8L8.5 61.1" stroke="#3f3f3f" stroke-width="3"/><path d="M12.3 55.0L7.4 55.6" stroke="#3f3f3f" stroke-width="3"/><path d="M12.0 50.0L7.0 50.0" stroke="#3f3f3f" stroke-width="3"/><path d="M12.3 45.0L7.4 44.4" stroke="#3f3f3f" stroke-width="3"/><path d="M13.3 40.2L8.5 38.9" stroke="#3f3f3f" stroke-width="3"/><path d="M14.9 35.5L10.3 33.5" stroke="#3f3f3f" stroke-width="3"/><path d="M17.1 31.0L12.8 28.5" stroke="#3f3f3f" stroke-width="3"/><path d="M19.9 26.9L15.9 23.8" stroke="#3f3f3f" stroke-width="3"/><path d="M23.1 23.1L19.6 19.6" stroke="#3f3f3f" stroke-width="3"/><path d="M26.9 19.9L23.8 15.9" stroke="#3f3f3f" stroke-width="3"/><path d="M31.0 17.1L28.5 12.8" stroke="#3f3f3f" stroke-width="3"/><path d="M35.5 14.9L33.5 10.3" stroke="#3f3f3f" stroke-width="3"/><path d="M40.2 13.3L38.9 8.5" stroke="#3f3f3f" stroke-width="3"/><path d="M45.0 12.3L44.4 7.4" stroke="#3f3f3f" stroke-width="3"/><path d="M50.0 12.0L50.0 7.0" stroke="#3f3f3f" stroke-width="3"/><path d="M55.0 12.3L55.6 7.4" stroke="#3f3f3f" stroke-width="3"/><path d="M59.8 13.3L61.1 8.5" stroke="#3f3f3f" stroke-width="3"/><path d="M64.5 14.9L66.5 10.3" stroke="#3f3f3f" stroke-width="3"/><path d="M69.0 17.1L71.5 12.8" stroke="#3f3f3f" stroke-width="3"/><path d="M73.1 19.9L76.2 15.9" stroke="#3f3f3f" stroke-width="3"/><path d="M76.9 23.1L80.4 19.6" stroke="#3f3f3f" stroke-width="3"/><path d="M80.1 26.9L84.1 23.8" stroke="#3f3f3f" stroke-width="3"/><path d="M82.9 31.0L87.2 28.5" stroke="#3f3f3f" stroke-width="3"/><path d="M85.1 35.5L89.7 33.5" stroke="#3f3f3f" stroke-width="3"/><path d="M86.7 40.2L91.5 38.9" stroke="#3f3f3f" stroke-width="3"/><path d="M87.7 45.0L92.6 44.4" stroke="#3f3f3f" stroke-width="3"/><circle cx="50" cy="50" r="33" fill="#8d8f92"/><circle cx="50" cy="50" r="28" fill="#5f6062"/><circle cx="50" cy="50" r="25" fill="#9a9c9f"/><circle cx="50" cy="50" r="22" fill="#6a6b6d"/><path d="M50 50L50 26M50 50L71 62M50 50L29 62" stroke="#9a9c9f" stroke-width="6"/><circle cx="50" cy="50" r="6" fill="#9a9c9f"/></g><circle cx="88" cy="12" r="23" fill="#ea4b3f"/><text x="88" y="22" font-size="29" fill="#fff" text-anchor="middle" font-family="Liberation Sans, sans-serif">2</text></svg>
<svg style="left:2146.6px;top:2016.6px;" width="52.8" height="52.8" viewBox="0 0 100 100"><defs><clipPath id="c2146"><rect x="0" y="0" width="100" height="100" rx="23"/></clipPath></defs><g clip-path="url(#c2146)"><defs><linearGradient id="ff" x1="0" y1="0" x2="0" y2="1"><stop offset="0" stop-color="#5fd2f7"/><stop offset="1" stop-color="#4aa8e8"/></linearGradient><linearGradient id="ffo" x1="0" y1="0" x2="0" y2="1"><stop offset="0" stop-color="#f5a03a"/><stop offset="1" stop-color="#ee5a52"/></linearGradient></defs><rect width="100" height="100" fill="#fff"/><circle cx="38" cy="60" r="27" fill="url(#ffo)"/><rect x="33" y="13" width="55" height="55" rx="7" fill="url(#ff)"/><path d="M19 62Q28 36 40 40Q50 46 44 58Q52 36 62 38Q70 42 66 54Q76 44 89 44" fill="none" stroke="#143a6a" stroke-width="4.500" stroke-linecap="round"/></g></svg>
<svg style="left:2248.7px;top:2016.6px;" width="52.8" height="52.8" viewBox="0 0 100 100"><defs><clipPath id="c2248"><rect x="0" y="0" width="100" height="100" rx="23"/></clipPath></defs><g clip-path="url(#c2248)"><rect width="100" height="100" fill="#f7f7f7"/><circle cx="50" cy="50" r="43" fill="#dc4a3c"/><path d="M50 50L12.800 28.500A43 43 0 0 0 38 91.300L59.500 54Z" fill="#4c9f52"/><path d="M50 50L38 91.300A43 43 0 0 0 87.200 28.500H44Z" fill="#f3bc3c"/><path d="M50 28.500H87.200A43 43 0 0 0 12.800 28.500L31.400 60.700Z" fill="#dc4a3c"/><circle cx="50" cy="50" r="21.500" fill="#fff"/><circle cx="50" cy="50" r="17" fill="#4a85e8"/></g></svg>
<svg style="left:2318.6px;top:2016.6px;" width="52.8" height="52.8" viewBox="0 0 100 100"><defs><clipPath id="c2318"><rect x="0" y="0" width="100" height="100" rx="23"/></clipPath></defs><g clip-path="url(#c2318)"><defs><radialGradient id="fg" cx=".5" cy=".5" r=".7"><stop offset="0" stop-color="#2b2b2b"/><stop offset="1" stop-color="#141414"/></radialGradient></defs><rect width="100" height="100" fill="url(#fg)"/><path d="M38 15H50V39H38A12 12 0 0 1 38 15Z" fill="#f2382a"/><path d="M50 15H62A12 12 0 0 1 62 39H50Z" fill="#f4693a"/><path d="M38 39H50V63H38A12 12 0 0 1 38 39Z" fill="#9b55f6"/><circle cx="62" cy="51" r="12" fill="#3db6f8"/><path d="M38 63H50V75A12 12 0 1 1 38 63Z" fill="#3ecf7c"/></g></svg>
<svg style="left:2388.6px;top:2016.6px;" width="52.8" height="52.8" viewBox="0 0 100 100"><defs><clipPath id="c2388"><rect x="0" y="0" width="100" height="100" rx="23"/></clipPath></defs><g clip-path="url(#c2388)"><defs><linearGradient id="nt" x1="0" y1="0" x2="0" y2="1"><stop offset="0" stop-color="#fbd95a"/><stop offset="1" stop-color="#f6c63c"/></linearGradient><linearGradient id="ntb" x1="0" y1="0" x2="0" y2="1"><stop offset="0" stop-color="#f7f6f4"/><stop offset="1" stop-color="#ebe9e5"/></linearGradient></defs><rect width="100" height="100" fill="url(#ntb)"/><rect width="100" height="26" fill="url(#nt)"/><path d="M0 29H100" stroke="#c9c6c0" stroke-width="1" stroke-dasharray="1.500 1.500"/><path d="M0 50H100" stroke="#dcdad6" stroke-width="1.200"/><path d="M0 76H100" stroke="#dcdad6" stroke-width="1.200"/></g></svg>
<svg style="left:2458.5px;top:2016.6px;" width="52.8" height="52.8" viewBox="0 0 100 100"><defs><clipPath id="c2458"><rect x="0" y="0" width="100" height="100" rx="23"/></clipPath></defs><g clip-path="url(#c2458)"><rect width="100" height="100" fill="#330000"/><text x="51" y="71" font-size="59" font-weight="bold" fill="#f79a2c" text-anchor="middle" font-family="Liberation Sans, sans-serif" letter-spacing="-1">Ai</text></g></svg>
<svg style="left:2528.5px;top:2016.6px;" width="52.8" height="52.8" viewBox="0 0 100 100"><defs><linearGradient id="pv" x1="0" y1="0" x2="0" y2="1"><stop offset="0" stop-color="#9fb4e6"/><stop offset="1" stop-color="#c7d3ef"/></linearGradient></defs><rect x="0" y="0" width="100" height="100" rx="23" fill="#eeeeee"/><rect x="8" y="8" width="84" height="84" rx="15" fill="url(#pv)"/><path d="M8 55H92V77Q92 92 77 92H23Q8 92 8 77Z" fill="#2f5f98"/><path d="M8 72Q30 62 55 74Q75 80 92 72V77Q92 92 77 92H23Q8 92 8 77Z" fill="#dfe8ef"/><path d="M8 64L30 66L40 74L20 78L8 74Z" fill="#5b4a3a"/><path d="M54 62H94L103 96Q103 104 94 104H54Q45 104 45 96Z" fill="#e8ecef" opacity=".85" stroke="#9aa0a6" stroke-width="1.500"/><rect x="51" y="50" width="46" height="16" rx="5" fill="#1c1c1c"/><ellipse cx="74" cy="51" rx="23" ry="5" fill="#2e2e2e"/></svg>
<svg style="left:2633px;top:2011.400px;" width="47.400" height="61" viewBox="0 0 260 335"><defs><linearGradient id="tr" x1="0" y1="0" x2="0" y2="1"><stop offset="0" stop-color="#f2f2f2"/><stop offset="1" stop-color="#dadada"/></linearGradient></defs><path d="M2 60H258L232 310Q230 332 206 332H54Q30 332 28 310Z" fill="url(#tr)" opacity=".93"/><ellipse cx="130" cy="58" rx="128" ry="26" fill="#e6e6e6"/><ellipse cx="130" cy="58" rx="112" ry="18" fill="#9a9a9a"/><path d="M30 50L70 10L105 40L140 5L180 38L215 15L235 55Q130 85 30 50Z" fill="#e9e9e9"/><path d="M70 30L95 45L80 58Z" fill="#6a4030"/><path d="M150 25L175 40L160 55Z" fill="#3a5a90"/><path d="M105 38L125 30L120 50Z" fill="#4a9a50"/><path d="M180 40L205 32L200 55Z" fill="#b07030"/></svg>
<div style="left:698.0px;top:2078.1px;width:7.6px;height:7.6px;background:#0a0a0a;border-radius:50%;"></div>
<div style="left:2271.3px;top:2078.1px;width:7.6px;height:7.6px;background:#0a0a0a;border-radius:50%;"></div>
<div style="left:2341.3px;top:2078.1px;width:7.6px;height:7.6px;background:#0a0a0a;border-radius:50%;"></div>
<div style="left:2411.3px;top:2078.1px;width:7.6px;height:7.6px;background:#0a0a0a;border-radius:50%;"></div>
<div style="left:2481.3px;top:2078.1px;width:7.6px;height:7.6px;background:#0a0a0a;border-radius:50%;"></div>
<div style="left:2551.3px;top:2078.1px;width:7.6px;height:7.6px;background:#0a0a0a;border-radius:50%;"></div>
<svg style="left:1860px;top:0px;" width="600" height="50" viewBox="0 0 2420 202" preserveAspectRatio="none">
<g fill="none" stroke="#1c1c1c" stroke-width="8"><path d="M157 58H140A17 17 0 0 0 140 92H157ZM157 58H172A17 17 0 0 1 172 92H157M157 92H140A17 17 0 0 0 140 126H157ZM157 92H172A17 17 0 0 1 172 126A17 17 0 0 1 157 109M157 126V136A17 17 0 1 1 140 126"/></g>
<circle cx="205" cy="55" r="20" fill="#1c1c1c"/>
<rect x="361" y="38" width="134" height="91" rx="9" fill="none" stroke="#5c5c5c" stroke-width="5"/>
<rect x="372" y="49" width="112" height="69" rx="4" fill="none" stroke="#3c3c3c" stroke-width="7"/>
<path d="M398 49V118M386 84H398" stroke="#3c3c3c" stroke-width="6"/>
<path d="M678 160V95A64 64 0 1 1 742 160Z" fill="#000"/>
<path d="M772 70A38 38 0 1 0 780 100H745" fill="none" stroke="#fff" stroke-width="11"/>
<g fill="none" stroke="#1c1c1c" stroke-width="10"><path d="M1020 147A48 48 0 0 1 1002 62A52 52 0 0 1 1092 52A48 48 0 0 1 1078 147Z"/><path d="M1004 118Q1020 138 1044 120L1082 88Q1098 78 1104 98"/><path d="M1028 80Q1052 60 1070 84"/></g>
<path d="M1298 145V95Q1298 88 1308 88H1312V62Q1312 48 1326 48H1412Q1426 48 1426 62V88H1430Q1440 88 1440 95V145H1426V128H1312V145Z" fill="#1c1c1c"/>
<rect x="1326" y="62" width="38" height="24" rx="5" fill="#ebe9e3"/><rect x="1374" y="62" width="38" height="24" rx="5" fill="#ebe9e3"/>
<circle cx="1653" cy="95" r="52" fill="none" stroke="#1c1c1c" stroke-width="8"/><path d="M1638 72V118L1678 95Z" fill="#1c1c1c"/>
<rect x="1872" y="42" width="143" height="110" rx="22" fill="#1c1c1c"/>
<g fill="#ebe9e3"><rect x="1880" y="72" width="10" height="50" rx="4"/><rect x="1905" y="70" width="17" height="54"/><rect x="1930" y="70" width="17" height="54"/><rect x="1955" y="70" width="17" height="54"/><rect x="1980" y="70" width="17" height="54"/></g>
<rect x="2187" y="35" width="175" height="123" rx="20" fill="#1c1c1c"/>
<g stroke="#ebe9e3" stroke-width="8" fill="none"><path d="M2215 62L2228 50L2226 62H2262M2272 62L2284 50L2282 62H2340M2218 78V135M2218 82H2262V135M2232 96H2250V120H2232Z"/><path d="M2280 70V135M2272 92H2292M2272 118L2292 108M2302 62L2312 74M2340 58L2330 74M2298 84H2346M2298 108H2346M2312 84V135M2334 84V135"/></g>
</svg>
<svg style="left:2460px;top:0px;" width="600" height="50" viewBox="0 0 2420 202" preserveAspectRatio="none">
<g fill="none" stroke="#1c1c1c" stroke-width="8" stroke-linecap="round"><path d="M128 140A55 55 0 1 1 205 140"/><path d="M143 122A32 32 0 1 1 190 122"/></g><circle cx="166" cy="98" r="10" fill="#1c1c1c"/>
<path d="M385 75H412L448 45V150L412 120H385Z" fill="#1c1c1c"/>
<g fill="none" stroke-width="8" stroke-linecap="round"><path d="M472 78Q482 97 472 118" stroke="#1c1c1c"/><path d="M495 62Q512 97 495 134" stroke="#1c1c1c"/><path d="M518 48Q542 97 518 148" stroke="#aaa"/></g>
<path d="M710 68L772 122L740 148V45L772 72L710 128" fill="none" stroke="#1c1c1c" stroke-width="8" stroke-linejoin="round"/>
<rect x="938" y="52" width="180" height="88" rx="20" fill="none" stroke="#8a8a8a" stroke-width="5"/>
<rect x="950" y="64" width="156" height="64" rx="11" fill="#1c1c1c"/>
<path d="M1128 82Q1140 88 1140 97Q1140 106 1128 112Z" fill="#8a8a8a"/>
<path d="M1040 48L985 104H1020L1000 150L1062 88H1026Z" fill="#1c1c1c" stroke="#ebe9e3" stroke-width="7" stroke-linejoin="round"/>
<path d="M1297 78Q1362 20 1430 78L1412 97Q1362 55 1314 97Z" fill="#1c1c1c"/><path d="M1326 108Q1362 78 1400 108L1384 125Q1362 108 1342 125Z" fill="#1c1c1c"/><path d="M1350 134Q1362 124 1376 134L1362 148Z" fill="#1c1c1c"/>
<circle cx="1632" cy="90" r="34" fill="none" stroke="#1c1c1c" stroke-width="10"/><path d="M1656 116L1686 145" stroke="#1c1c1c" stroke-width="12" stroke-linecap="round"/>
<rect x="1864" y="46" width="98" height="42" rx="21" fill="none" stroke="#1c1c1c" stroke-width="8"/><circle cx="1886" cy="67" r="12" fill="#1c1c1c"/>
<rect x="1860" y="104" width="106" height="46" rx="23" fill="#1c1c1c"/><circle cx="1942" cy="127" r="13" fill="#ebe9e3"/>
<defs><radialGradient id="siri" cx=".5" cy=".5" r=".5"><stop offset="0" stop-color="#fff"/><stop offset=".250" stop-color="#e9d8f5"/><stop offset=".600" stop-color="#8a6fd8"/><stop offset="1" stop-color="#5a64c8"/></radialGradient></defs>
<circle cx="2170" cy="96" r="55" fill="url(#siri)"/><path d="M2118 110A55 55 0 0 1 2150 45Q2165 70 2150 100Q2135 120 2118 110Z" fill="#e84a7a" opacity=".85"/><path d="M2222 80A55 55 0 0 1 2190 147Q2180 120 2195 100Q2210 85 2222 80Z" fill="#3fb7d8" opacity=".85"/><path d="M2150 45A55 55 0 0 1 2215 66Q2190 75 2170 70Q2155 62 2150 45Z" fill="#3fcf9a" opacity=".6"/><circle cx="2172" cy="96" r="14" fill="#fff" opacity=".95"/>
</svg>
</body></html>
